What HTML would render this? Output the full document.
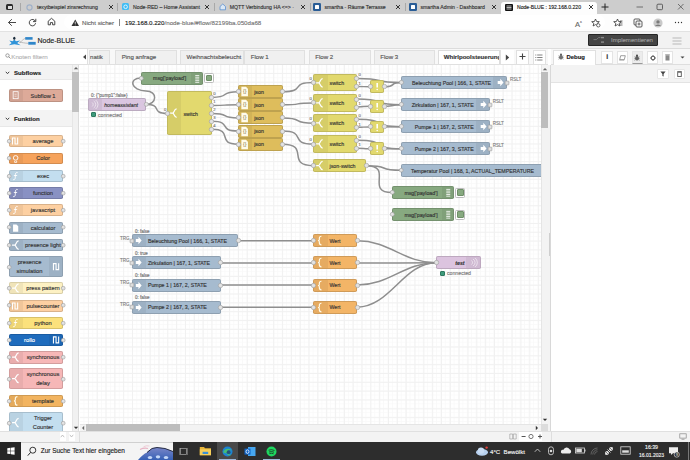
<!DOCTYPE html><html><head><meta charset="utf-8"><style>
html,body{margin:0;padding:0}
body{width:690px;height:460px;overflow:hidden;position:relative;font-family:"Liberation Sans",sans-serif;background:#fff}
div{box-sizing:border-box;-webkit-text-stroke-width:0.14px}
</style></head><body>
<div style="position:absolute;left:0px;top:0px;width:690px;height:13.5px;background:#cdcdcd"></div>
<div style="position:absolute;left:6px;top:3.5px;width:7px;height:6.5px;background:#2b2b2b;border-radius:1.5px"></div>
<div style="position:absolute;left:7.5px;top:6.2px;width:4px;height:2.8px;background:#ddd"></div>
<div style="position:absolute;left:20px;top:3px;width:0.8px;height:8px;background:#a8a8a8"></div>
<div style="position:absolute;left:117px;top:3px;width:0.8px;height:8px;background:#a8a8a8"></div>
<div style="position:absolute;left:213.6px;top:3px;width:0.8px;height:8px;background:#a8a8a8"></div>
<div style="position:absolute;left:309.6px;top:3px;width:0.8px;height:8px;background:#a8a8a8"></div>
<div style="position:absolute;left:405px;top:3px;width:0.8px;height:8px;background:#a8a8a8"></div>
<svg style="position:absolute;left:26px;top:3.5px;" width="7" height="7" viewBox="0 0 7 7"><circle cx="3.5" cy="3.5" r="2.6" fill="none" stroke="#9fb0c8" stroke-width="1.1"/></svg>
<div style="position:absolute;left:37px;top:3.88px;height:6.24px;line-height:6.24px;font-size:5.2px;color:#333;white-space:nowrap;">texytbeispiel zinsrechnung</div>
<svg style="position:absolute;left:107.5px;top:4px;" width="6" height="6" viewBox="0 0 6 6"><path d="M1 1 L5 5 M5 1 L1 5" stroke="#222" stroke-width="0.9"/></svg>
<div style="position:absolute;left:122px;top:3.2px;width:7.2px;height:7.2px;background:#41bdf5;border-radius:1.5px"></div>
<svg style="position:absolute;left:122px;top:3.2px;" width="7.2" height="7.2" viewBox="0 0 7.2 7.2"><circle cx="3.6" cy="3.8" r="1.8" fill="none" stroke="#fff" stroke-width="0.8"/></svg>
<div style="position:absolute;left:133px;top:3.88px;height:6.24px;line-height:6.24px;font-size:5.2px;color:#333;white-space:nowrap;">Node-RED – Home Assistant</div>
<svg style="position:absolute;left:203.5px;top:4px;" width="6" height="6" viewBox="0 0 6 6"><path d="M1 1 L5 5 M5 1 L1 5" stroke="#222" stroke-width="0.9"/></svg>
<svg style="position:absolute;left:218.7px;top:3px;" width="7.5" height="7.5" viewBox="0 0 7.5 7.5"><path d="M1 3.5 L3.75 1 L6.5 3.5 V6.8 H1 Z" fill="#dbe8f5" stroke="#5b8fd0" stroke-width="0.8"/></svg>
<div style="position:absolute;left:229.7px;top:3.88px;height:6.24px;line-height:6.24px;font-size:5.2px;color:#333;white-space:nowrap;">MQTT Verbindung HA &lt;=&gt; ·</div>
<svg style="position:absolute;left:299.5px;top:4px;" width="6" height="6" viewBox="0 0 6 6"><path d="M1 1 L5 5 M5 1 L1 5" stroke="#222" stroke-width="0.9"/></svg>
<div style="position:absolute;left:313.4px;top:3.3px;width:7.4px;height:7.4px;background:#2a5d96;border-radius:1.2px"></div>
<div style="position:absolute;left:315.09999999999997px;top:5.0px;width:4px;height:4px;background:#fff;border-radius:0.5px"></div>
<div style="position:absolute;left:324.4px;top:3.88px;height:6.24px;line-height:6.24px;font-size:5.2px;color:#333;white-space:nowrap;">smartha - Räume Terrasse</div>
<svg style="position:absolute;left:394.8px;top:4px;" width="6" height="6" viewBox="0 0 6 6"><path d="M1 1 L5 5 M5 1 L1 5" stroke="#222" stroke-width="0.9"/></svg>
<div style="position:absolute;left:409.4px;top:3.3px;width:7.4px;height:7.4px;background:#2a5d96;border-radius:1.2px"></div>
<div style="position:absolute;left:411.09999999999997px;top:5.0px;width:4px;height:4px;background:#fff;border-radius:0.5px"></div>
<div style="position:absolute;left:420.4px;top:3.88px;height:6.24px;line-height:6.24px;font-size:5.2px;color:#333;white-space:nowrap;">smartha Admin - Dashboard</div>
<svg style="position:absolute;left:491.2px;top:4px;" width="6" height="6" viewBox="0 0 6 6"><path d="M1 1 L5 5 M5 1 L1 5" stroke="#222" stroke-width="0.9"/></svg>
<div style="position:absolute;left:501px;top:2px;width:96px;height:12px;background:#fdfdfd;border-radius:3px 3px 0 0"></div>
<div style="position:absolute;left:504.5px;top:3.5px;width:8px;height:7px;background:#111;border-radius:1px"></div>
<svg style="position:absolute;left:504.5px;top:3.5px;" width="8" height="7" viewBox="0 0 8 7"><path d="M1.5 2 H6.5 M1.5 3.5 L6.5 3.5 M1.5 5 H6.5" stroke="#fff" stroke-width="0.7"/></svg>
<div style="position:absolute;left:517px;top:4.140000000000001px;height:6.119999999999999px;line-height:6.119999999999999px;font-size:5.1px;color:#222;white-space:nowrap;">Node-BLUE : 192.168.0.220</div>
<svg style="position:absolute;left:587.5px;top:4px;" width="6" height="6" viewBox="0 0 6 6"><path d="M1 1 L5 5 M5 1 L1 5" stroke="#222" stroke-width="0.9"/></svg>
<svg style="position:absolute;left:600.5px;top:3px;" width="8" height="8" viewBox="0 0 8 8"><path d="M4 0.5 V7.5 M0.5 4 H7.5" stroke="#222" stroke-width="1"/></svg>
<svg style="position:absolute;left:636px;top:3px;" width="8" height="8" viewBox="0 0 8 8"><path d="M0.5 4 H7" stroke="#555" stroke-width="0.8"/></svg>
<svg style="position:absolute;left:656px;top:3.2px;" width="8" height="8" viewBox="0 0 8 8"><rect x="1" y="1.2" width="5.5" height="5.5" rx="1" fill="none" stroke="#444" stroke-width="0.8"/></svg>
<svg style="position:absolute;left:676.5px;top:3.2px;" width="8" height="8" viewBox="0 0 8 8"><path d="M1 1 L6.5 6.5 M6.5 1 L1 6.5" stroke="#555" stroke-width="0.8"/></svg>
<div style="position:absolute;left:0px;top:13.5px;width:690px;height:17.5px;background:#fdfdfd"></div>
<div style="position:absolute;left:64px;top:15.3px;width:541px;height:14.2px;background:#fff;border-radius:7px"></div>
<div style="position:absolute;left:0px;top:31px;width:690px;height:1px;background:#e2e2e2"></div>
<svg style="position:absolute;left:7px;top:17.5px;" width="10" height="9" viewBox="0 0 10 9"><path d="M9 4.5 H1.5 M4.8 1.2 L1.5 4.5 L4.8 7.8" fill="none" stroke="#333" stroke-width="0.9"/></svg>
<svg style="position:absolute;left:27.5px;top:17.5px;" width="9" height="9" viewBox="0 0 9 9"><path d="M7.3 3.2 A3.2 3.2 0 1 0 7.6 5.2" fill="none" stroke="#333" stroke-width="0.9"/><path d="M7.8 0.8 V3.6 H5" fill="none" stroke="#333" stroke-width="0.9"/></svg>
<svg style="position:absolute;left:46.5px;top:17.3px;" width="9" height="9" viewBox="0 0 9 9"><path d="M1.2 4.2 L4.5 1.3 L7.8 4.2 V7.8 H5.6 V5.6 H3.4 V7.8 H1.2 Z" fill="none" stroke="#333" stroke-width="0.9" stroke-linejoin="round"/></svg>
<svg style="position:absolute;left:71px;top:18.5px;" width="8.5" height="7.5" viewBox="0 0 8.5 7.5"><path d="M4.25 0.6 L8 7 H0.5 Z" fill="#333"/><path d="M4.25 2.7 V4.8" stroke="#fff" stroke-width="0.8"/><circle cx="4.25" cy="5.9" r="0.45" fill="#fff"/></svg>
<div style="position:absolute;left:82px;top:18.622px;height:7.356px;line-height:7.356px;font-size:6.13px;color:#666;white-space:nowrap;">Nicht sicher</div>
<div style="position:absolute;left:118.5px;top:18.5px;width:0.7px;height:7.5px;background:#888"></div>
<div style="position:absolute;left:125px;top:18.592000000000002px;height:7.4159999999999995px;line-height:7.4159999999999995px;font-size:6.18px;color:#777;white-space:nowrap;"><span style="color:#222">192.168.0.220</span><span style="color:#777">/node-blue/#flow/82199ba.050da68</span></div>
<div style="position:absolute;left:575px;top:17.8px;height:9.0px;line-height:9.0px;font-size:7.5px;color:#666;white-space:nowrap;">A<sup style="font-size:3.5px">ᴧ</sup></div>
<svg style="position:absolute;left:591px;top:17.5px;" width="10" height="10" viewBox="0 0 10 10"><path d="M4.5 1 L5.6 3.5 L8.3 3.7 L6.2 5.4 L6.9 8 L4.5 6.6 L2.1 8 L2.8 5.4 L0.7 3.7 L3.4 3.5 Z" fill="none" stroke="#333" stroke-width="0.8"/><circle cx="7.3" cy="7.3" r="1.7" fill="#fff" stroke="#333" stroke-width="0.7"/></svg>
<svg style="position:absolute;left:612.5px;top:17.5px;" width="10" height="10" viewBox="0 0 10 10"><path d="M4.5 1 L5.6 3.5 L8.3 3.7 L6.2 5.4 L6.9 8 L4.5 6.6 L2.1 8 L2.8 5.4 L0.7 3.7 L3.4 3.5 Z" fill="none" stroke="#333" stroke-width="0.8"/><path d="M7 3 H9.5 M7 5 H9.5 M7 7 H9.5" stroke="#333" stroke-width="0.7"/></svg>
<svg style="position:absolute;left:632.5px;top:17.5px;" width="10" height="10" viewBox="0 0 10 10"><rect x="1" y="1" width="6" height="6" rx="1" fill="none" stroke="#333" stroke-width="0.8"/><rect x="3" y="3" width="6" height="6" rx="1" fill="#f7f7f7" stroke="#333" stroke-width="0.8"/><path d="M6 4.5 V7.5 M4.5 6 H7.5" stroke="#333" stroke-width="0.7"/></svg>
<svg style="position:absolute;left:652.5px;top:17.5px;" width="10" height="10" viewBox="0 0 10 10"><circle cx="5" cy="5" r="4.6" fill="#c9c9c9"/><circle cx="5" cy="3.9" r="1.7" fill="#7a7a7a"/><path d="M1.8 8 Q5 4.8 8.2 8" fill="#7a7a7a"/></svg>
<svg style="position:absolute;left:673.5px;top:20px;" width="10" height="5" viewBox="0 0 10 5"><circle cx="1.5" cy="2.5" r="0.65" fill="#333"/><circle cx="4.5" cy="2.5" r="0.65" fill="#333"/><circle cx="7.5" cy="2.5" r="0.65" fill="#333"/></svg>
<div style="position:absolute;left:0px;top:32px;width:690px;height:16.4px;background:#f2f2f2"></div>
<div style="position:absolute;left:0px;top:48.1px;width:690px;height:0.6px;background:#dcdcdc"></div>
<svg style="position:absolute;left:0px;top:30px;" width="40" height="20" viewBox="0 0 40 20">
<path d="M9.3 40.6 L12.6 41.2 L14.3 39.6 L16 41.2 L20.2 40.6 L17.2 43 L20.6 45.2 L14.3 44.2 L8.8 45.2 L11.6 43 Z" fill="#2f93d8" transform="translate(0,-30)"/>
<ellipse cx="14.3" cy="8.2" rx="1.15" ry="1.5" fill="#1a2a3a"/>
<path d="M19.5 12.3 C22 12.3 22.5 8.5 25.3 8.5" fill="none" stroke="#999" stroke-width="0.6"/>
<path d="M19.5 12.3 C22.5 12.3 24.5 13.3 28.3 13.3" fill="none" stroke="#999" stroke-width="0.6"/>
<rect x="25.2" y="7.1" width="7.4" height="2.6" fill="#2f86c9"/>
<rect x="28.3" y="11.9" width="7.4" height="2.8" fill="#2f86c9"/>
</svg>
<div style="position:absolute;left:37.5px;top:36.982px;height:8.436px;line-height:8.436px;font-size:7.03px;color:#222;white-space:nowrap;">Node-BLUE</div>
<div style="position:absolute;left:588px;top:33.7px;width:70px;height:12.6px;background:#454545;border:0.8px solid #262626;border-radius:1px"></div>
<svg style="position:absolute;left:592.5px;top:36px;" width="12" height="8" viewBox="0 0 12 8"><path d="M0.5 3.6 H3.5 L5.5 1.6 H7.5" fill="none" stroke="#8a8a8a" stroke-width="0.7"/><rect x="8" y="0.9" width="3" height="1.4" fill="#8a8a8a"/><rect x="8" y="5.4" width="3" height="1.4" fill="#8a8a8a"/></svg>
<div style="position:absolute;left:611px;top:35.846000000000004px;height:7.308px;line-height:7.308px;font-size:6.09px;color:#9d9d9d;white-space:nowrap;">Implementieren</div>
<svg style="position:absolute;left:672px;top:36.5px;" width="10" height="8" viewBox="0 0 10 8"><path d="M0.5 1 H9.5 M0.5 4 H9.5 M0.5 7 H9.5" stroke="#aaa" stroke-width="0.8"/></svg>
<div style="position:absolute;left:0px;top:48.7px;width:548px;height:15.8px;background:#f8f8f8"></div>
<div style="position:absolute;left:0px;top:48.7px;width:88px;height:15.6px;background:#fff;border-right:0.6px solid #e0e0e0"></div>
<svg style="position:absolute;left:4.5px;top:52.5px;" width="6" height="6" viewBox="0 0 6 6"><circle cx="2.5" cy="2.5" r="1.7" fill="none" stroke="#888" stroke-width="0.8"/><path d="M3.7 3.7 L5.5 5.5" stroke="#888" stroke-width="0.9"/></svg>
<div style="position:absolute;left:11.3px;top:52.886px;height:7.428px;line-height:7.428px;font-size:6.19px;color:#b5b5b5;white-space:nowrap;">Knoten filtern</div>
<svg style="position:absolute;left:81.5px;top:53.5px;" width="5" height="6" viewBox="0 0 5 6"><path d="M4 0.5 L1 3 L4 5.5 Z" fill="#444"/></svg>
<div style="position:absolute;left:88.5px;top:49.5px;width:21.5px;height:14.8px;background:#f0f0f0;border:0.6px solid #e0e0e0;border-bottom:none;overflow:hidden"><div style="position:absolute;left:0.5px;top:-1px;line-height:14px;font-size:6.1px;color:#555;white-space:nowrap">natik</div></div>
<div style="position:absolute;left:115.2px;top:49.5px;width:61.39999999999999px;height:14.8px;background:#f0f0f0;border:0.6px solid #e0e0e0;border-bottom:none;overflow:hidden"><div style="position:absolute;left:5.5px;top:-1px;line-height:14px;font-size:6.1px;color:#555;white-space:nowrap">Ping anfrage</div></div>
<div style="position:absolute;left:180px;top:49.5px;width:64px;height:14.8px;background:#f0f0f0;border:0.6px solid #e0e0e0;border-bottom:none;overflow:hidden"><div style="position:absolute;left:5.5px;top:-1px;line-height:14px;font-size:6.1px;color:#555;white-space:nowrap">Weihnachtsbeleucht</div></div>
<div style="position:absolute;left:244.3px;top:49.5px;width:60.69999999999999px;height:14.8px;background:#f0f0f0;border:0.6px solid #e0e0e0;border-bottom:none;overflow:hidden"><div style="position:absolute;left:5.5px;top:-1px;line-height:14px;font-size:6.1px;color:#555;white-space:nowrap">Flow 1</div></div>
<div style="position:absolute;left:308.8px;top:49.5px;width:61.89999999999998px;height:14.8px;background:#f0f0f0;border:0.6px solid #e0e0e0;border-bottom:none;overflow:hidden"><div style="position:absolute;left:5.5px;top:-1px;line-height:14px;font-size:6.1px;color:#555;white-space:nowrap">Flow 2</div></div>
<div style="position:absolute;left:373.7px;top:49.5px;width:61.30000000000001px;height:14.8px;background:#f0f0f0;border:0.6px solid #e0e0e0;border-bottom:none;overflow:hidden"><div style="position:absolute;left:5.5px;top:-1px;line-height:14px;font-size:6.1px;color:#555;white-space:nowrap">Flow 3</div></div>
<div style="position:absolute;left:437.5px;top:49.5px;width:62.30000000000001px;height:15.2px;background:#fff;border:0.6px solid #ddd;border-bottom:none;overflow:hidden"><div style="position:absolute;left:5.2px;top:-1px;line-height:14px;font-size:6.1px;font-weight:bold;color:#333;white-space:nowrap">Whirlpoolsteuerung</div></div>
<div style="position:absolute;left:0px;top:64.2px;width:548px;height:0.6px;background:#e0e0e0"></div>
<div style="position:absolute;left:500px;top:49.5px;width:14px;height:14.8px;background:#fff;border-left:0.6px solid #e0e0e0"></div>
<svg style="position:absolute;left:505px;top:53.5px;" width="5" height="7" viewBox="0 0 5 7"><path d="M0.8 0.5 L4.2 3.5 L0.8 6.5 Z" fill="#444"/></svg>
<div style="position:absolute;left:515.8px;top:49.5px;width:13.2px;height:14.8px;background:#fff;border:0.6px solid #e0e0e0;border-bottom:none"></div>
<svg style="position:absolute;left:518.9px;top:53.4px;" width="7" height="7" viewBox="0 0 7 7"><path d="M3.5 0.5 V6.5 M0.5 3.5 H6.5" stroke="#444" stroke-width="1.1"/></svg>
<div style="position:absolute;left:532.8px;top:49.5px;width:13.2px;height:14.8px;background:#fff;border:0.6px solid #e0e0e0;border-bottom:none"></div>
<svg style="position:absolute;left:535.4px;top:53.5px;" width="8" height="7" viewBox="0 0 8 7"><path d="M2.2 1 H7.5 M2.2 3.5 H7.5 M2.2 6 H7.5 M0.3 1 H1.3 M0.3 3.5 H1.3 M0.3 6 H1.3" stroke="#555" stroke-width="0.75"/></svg>
<div style="position:absolute;left:0px;top:64.8px;width:79.5px;height:366.4px;background:#fff"></div>
<div style="position:absolute;left:72.3px;top:64.8px;width:7.2px;height:366.4px;background:#f1f1f1;border-left:0.5px solid #e6e6e6;border-right:0.6px solid #dcdcdc"></div>
<div style="position:absolute;left:72.4px;top:71.8px;width:6.9px;height:39.9px;background:#c1c1c1"></div>
<svg style="position:absolute;left:73px;top:66px;" width="6" height="4" viewBox="0 0 6 4"><path d="M0.8 3.2 L3 1 L5.2 3.2 Z" fill="#666"/></svg>
<svg style="position:absolute;left:73px;top:425.5px;" width="6" height="4" viewBox="0 0 6 4"><path d="M0.8 0.8 L3 3 L5.2 0.8 Z" fill="#333"/></svg>
<div style="position:absolute;left:0px;top:64.8px;width:72.3px;height:15.5px;background:#f3f3f3;border-bottom:0.5px solid #e8e8e8"></div>
<svg style="position:absolute;left:4.8px;top:70.55px;" width="5" height="4" viewBox="0 0 5 4"><path d="M0.8 0.8 L2.5 2.7 L4.2 0.8" fill="none" stroke="#444" stroke-width="1"/></svg>
<div style="position:absolute;left:14px;top:69.002px;height:7.295999999999999px;line-height:7.295999999999999px;font-size:6.08px;color:#222;white-space:nowrap;font-weight:bold">Subflows</div>
<div style="position:absolute;left:0px;top:110.3px;width:72.3px;height:16.5px;background:#f3f3f3;border-bottom:0.5px solid #e8e8e8"></div>
<svg style="position:absolute;left:4.8px;top:116.55px;" width="5" height="4" viewBox="0 0 5 4"><path d="M0.8 0.8 L2.5 2.7 L4.2 0.8" fill="none" stroke="#444" stroke-width="1"/></svg>
<div style="position:absolute;left:14px;top:115.002px;height:7.295999999999999px;line-height:7.295999999999999px;font-size:6.08px;color:#222;white-space:nowrap;font-weight:bold">Funktion</div>
<div style="position:absolute;left:9.1px;top:89.4px;width:53.6px;height:12.399999999999991px;background:#ddaa99;border:0.6px solid rgba(0,0,0,0.14);border-radius:1.8px;overflow:hidden">
<div style="position:absolute;left:0;top:0;width:13.3px;height:100%;background:rgba(0,0,0,0.05);"></div>
</div>
<svg style="position:absolute;left:9.1px;top:89.4px;" width="13.3" height="12.399999999999991" viewBox="0 0 13.3 12.399999999999991"><rect x="4.15" y="2.6999999999999957" width="5" height="7" fill="none" stroke="#fff" stroke-width="0.8"/><path d="M5.45 5.199999999999996 H7.65 M5.45 7.199999999999996 H7.65" stroke="#fff" stroke-width="0.6"/></svg>
<div style="position:absolute;left:-157px;width:400px;text-align:center;top:92.58px;height:6.84px;line-height:6.84px;font-size:5.7px;color:#333;white-space:nowrap;">Subflow 1</div>
<div style="position:absolute;left:9.1px;top:135.4px;width:54.1px;height:11.900000000000006px;background:#fdd0a2;border:0.6px solid rgba(0,0,0,0.14);border-radius:1.8px;overflow:hidden">
<div style="position:absolute;left:0;top:0;width:13.3px;height:100%;background:rgba(0,0,0,0.05);"></div>
</div>
<svg style="position:absolute;left:9.1px;top:135.4px;" width="13.3" height="11.900000000000006" viewBox="0 0 13.3 11.900000000000006"><path d="M3.45 9.450000000000003 V2.950000000000003 H6.050000000000001 V8.950000000000003 H8.65 V2.450000000000003" fill="none" stroke="#fff" stroke-width="1.1"/></svg>
<div style="position:absolute;left:-157px;width:400px;text-align:center;top:138.30000000000004px;height:6.8999999999999995px;line-height:6.8999999999999995px;font-size:5.75px;color:#333;white-space:nowrap;">average</div>
<svg style="position:absolute;left:5.8999999999999995px;top:138.15000000000003px" width="6.4" height="6.4"><circle cx="3.2" cy="3.2" r="1.9000000000000001" fill="#e2e2e2" stroke="#9a9a9a" stroke-width="0.6"/></svg>
<svg style="position:absolute;left:60.0px;top:138.15000000000003px" width="6.4" height="6.4"><circle cx="3.2" cy="3.2" r="1.9000000000000001" fill="#e2e2e2" stroke="#9a9a9a" stroke-width="0.6"/></svg>
<div style="position:absolute;left:9.1px;top:152.6px;width:54.1px;height:11.800000000000011px;background:#f6a35c;border:0.6px solid rgba(0,0,0,0.14);border-radius:1.8px;overflow:hidden">
<div style="position:absolute;left:0;top:0;width:13.3px;height:100%;background:rgba(0,0,0,0.05);"></div>
</div>
<svg style="position:absolute;left:9.1px;top:152.6px;" width="13.3" height="11.800000000000011" viewBox="0 0 13.3 11.800000000000011"><circle cx="6.65" cy="4.900000000000006" r="2.3" fill="none" stroke="#fff" stroke-width="0.9"/><path d="M5.65 7.900000000000006 V9.400000000000006 H7.65 V7.900000000000006" fill="none" stroke="#fff" stroke-width="0.8"/></svg>
<div style="position:absolute;left:-157px;width:400px;text-align:center;top:155.45000000000002px;height:6.8999999999999995px;line-height:6.8999999999999995px;font-size:5.75px;color:#333;white-space:nowrap;">Color</div>
<svg style="position:absolute;left:5.8999999999999995px;top:155.3px" width="6.4" height="6.4"><circle cx="3.2" cy="3.2" r="1.9000000000000001" fill="#e2e2e2" stroke="#9a9a9a" stroke-width="0.6"/></svg>
<div style="position:absolute;left:9.1px;top:170.1px;width:54.1px;height:12.200000000000017px;background:#c3deef;border:0.6px solid rgba(0,0,0,0.14);border-radius:1.8px;overflow:hidden">
<div style="position:absolute;left:0;top:0;width:13.3px;height:100%;background:rgba(0,0,0,0.05);"></div>
</div>
<svg style="position:absolute;left:9.1px;top:170.1px;" width="13.3" height="12.200000000000017" viewBox="0 0 13.3 12.200000000000017"><path d="M8.65 2.6000000000000085 C6.65 1.9000000000000083 6.3500000000000005 3.6000000000000085 6.3500000000000005 6.1000000000000085 C6.3500000000000005 8.600000000000009 6.050000000000001 10.100000000000009 4.15 9.700000000000008 M4.8500000000000005 5.500000000000009 H8.15" fill="none" stroke="#fff" stroke-width="0.9"/></svg>
<div style="position:absolute;left:-157px;width:400px;text-align:center;top:173.15px;height:6.8999999999999995px;line-height:6.8999999999999995px;font-size:5.75px;color:#333;white-space:nowrap;">exec</div>
<svg style="position:absolute;left:5.8999999999999995px;top:173.0px" width="6.4" height="6.4"><circle cx="3.2" cy="3.2" r="1.9000000000000001" fill="#e2e2e2" stroke="#9a9a9a" stroke-width="0.6"/></svg>
<svg style="position:absolute;left:60.0px;top:173.0px" width="6.4" height="6.4"><circle cx="3.2" cy="3.2" r="1.9000000000000001" fill="#e2e2e2" stroke="#9a9a9a" stroke-width="0.6"/></svg>
<div style="position:absolute;left:9.1px;top:186.9px;width:54.1px;height:12.099999999999994px;background:#8991c3;border:0.6px solid rgba(0,0,0,0.14);border-radius:1.8px;overflow:hidden">
<div style="position:absolute;left:0;top:0;width:13.3px;height:100%;background:rgba(0,0,0,0.05);"></div>
</div>
<svg style="position:absolute;left:9.1px;top:186.9px;" width="13.3" height="12.099999999999994" viewBox="0 0 13.3 12.099999999999994"><path d="M8.65 2.549999999999997 C6.65 1.849999999999997 6.3500000000000005 3.549999999999997 6.3500000000000005 6.049999999999997 C6.3500000000000005 8.549999999999997 6.050000000000001 10.049999999999997 4.15 9.649999999999997 M4.8500000000000005 5.4499999999999975 H8.15" fill="none" stroke="#fff" stroke-width="0.9"/></svg>
<div style="position:absolute;left:-157px;width:400px;text-align:center;top:189.9px;height:6.8999999999999995px;line-height:6.8999999999999995px;font-size:5.75px;color:#333;white-space:nowrap;">function</div>
<svg style="position:absolute;left:5.8999999999999995px;top:189.75px" width="6.4" height="6.4"><circle cx="3.2" cy="3.2" r="1.9000000000000001" fill="#e2e2e2" stroke="#9a9a9a" stroke-width="0.6"/></svg>
<svg style="position:absolute;left:60.0px;top:189.75px" width="6.4" height="6.4"><circle cx="3.2" cy="3.2" r="1.9000000000000001" fill="#e2e2e2" stroke="#9a9a9a" stroke-width="0.6"/></svg>
<div style="position:absolute;left:9.1px;top:204.4px;width:54.1px;height:12.099999999999994px;background:#fdd0a2;border:0.6px solid rgba(0,0,0,0.14);border-radius:1.8px;overflow:hidden">
<div style="position:absolute;left:0;top:0;width:13.3px;height:100%;background:rgba(0,0,0,0.05);"></div>
</div>
<svg style="position:absolute;left:9.1px;top:204.4px;" width="13.3" height="12.099999999999994" viewBox="0 0 13.3 12.099999999999994"><path d="M8.65 2.549999999999997 C6.65 1.849999999999997 6.3500000000000005 3.549999999999997 6.3500000000000005 6.049999999999997 C6.3500000000000005 8.549999999999997 6.050000000000001 10.049999999999997 4.15 9.649999999999997 M4.8500000000000005 5.4499999999999975 H8.15" fill="none" stroke="#fff" stroke-width="0.9"/></svg>
<div style="position:absolute;left:-157px;width:400px;text-align:center;top:207.4px;height:6.8999999999999995px;line-height:6.8999999999999995px;font-size:5.75px;color:#333;white-space:nowrap;">javascript</div>
<svg style="position:absolute;left:5.8999999999999995px;top:207.25px" width="6.4" height="6.4"><circle cx="3.2" cy="3.2" r="1.9000000000000001" fill="#e2e2e2" stroke="#9a9a9a" stroke-width="0.6"/></svg>
<svg style="position:absolute;left:60.0px;top:207.25px" width="6.4" height="6.4"><circle cx="3.2" cy="3.2" r="1.9000000000000001" fill="#e2e2e2" stroke="#9a9a9a" stroke-width="0.6"/></svg>
<div style="position:absolute;left:9.1px;top:221.6px;width:54.1px;height:12.099999999999994px;background:#a6bbcf;border:0.6px solid rgba(0,0,0,0.14);border-radius:1.8px;overflow:hidden">
<div style="position:absolute;left:0;top:0;width:13.3px;height:100%;background:rgba(0,0,0,0.05);"></div>
</div>
<svg style="position:absolute;left:9.1px;top:221.6px;" width="13.3" height="12.099999999999994" viewBox="0 0 13.3 12.099999999999994"><path d="M4.050000000000001 2.449999999999997 H7.45 L9.25 4.249999999999997 V9.649999999999997 H4.050000000000001 Z" fill="#fff"/></svg>
<div style="position:absolute;left:-157px;width:400px;text-align:center;top:224.6px;height:6.8999999999999995px;line-height:6.8999999999999995px;font-size:5.75px;color:#333;white-space:nowrap;">calculator</div>
<svg style="position:absolute;left:5.8999999999999995px;top:224.45px" width="6.4" height="6.4"><circle cx="3.2" cy="3.2" r="1.9000000000000001" fill="#e2e2e2" stroke="#9a9a9a" stroke-width="0.6"/></svg>
<svg style="position:absolute;left:60.0px;top:224.45px" width="6.4" height="6.4"><circle cx="3.2" cy="3.2" r="1.9000000000000001" fill="#e2e2e2" stroke="#9a9a9a" stroke-width="0.6"/></svg>
<div style="position:absolute;left:9.1px;top:238.9px;width:54.1px;height:12.199999999999989px;background:#a6bbcf;border:0.6px solid rgba(0,0,0,0.14);border-radius:1.8px;overflow:hidden">
<div style="position:absolute;left:0;top:0;width:13.3px;height:100%;background:rgba(0,0,0,0.05);"></div>
</div>
<svg style="position:absolute;left:9.1px;top:238.9px;" width="13.3" height="12.199999999999989" viewBox="0 0 13.3 12.199999999999989"><path d="M3.0500000000000003 6.099999999999994 H5.65 C7.25 6.099999999999994 6.95 1.8999999999999941 9.65 1.8999999999999941 M5.65 6.099999999999994 C7.25 6.099999999999994 6.95 10.299999999999994 9.65 10.299999999999994" fill="none" stroke="#fff" stroke-width="1.25"/></svg>
<div style="position:absolute;left:-157px;width:400px;text-align:center;top:241.95000000000002px;height:6.8999999999999995px;line-height:6.8999999999999995px;font-size:5.75px;color:#333;white-space:nowrap;">presence light</div>
<svg style="position:absolute;left:5.8999999999999995px;top:241.8px" width="6.4" height="6.4"><circle cx="3.2" cy="3.2" r="1.9000000000000001" fill="#e2e2e2" stroke="#9a9a9a" stroke-width="0.6"/></svg>
<svg style="position:absolute;left:60.0px;top:241.8px" width="6.4" height="6.4"><circle cx="3.2" cy="3.2" r="1.9000000000000001" fill="#e2e2e2" stroke="#9a9a9a" stroke-width="0.6"/></svg>
<div style="position:absolute;left:9.1px;top:256.1px;width:54.1px;height:21.299999999999955px;background:#a6bbcf;border:0.6px solid rgba(0,0,0,0.14);border-radius:1.8px;overflow:hidden">
<div style="position:absolute;right:0;top:0;width:13.3px;height:100%;background:rgba(0,0,0,0.05);"></div>
</div>
<svg style="position:absolute;left:49.900000000000006px;top:256.1px;" width="13.3" height="21.299999999999955" viewBox="0 0 13.3 21.299999999999955"><path d="M3.45 14.149999999999977 V7.649999999999977 H6.050000000000001 V13.649999999999977 H8.65 V7.149999999999977" fill="none" stroke="#fff" stroke-width="1.1"/></svg>
<div style="position:absolute;left:-170.5px;width:400px;text-align:center;top:259.3875px;height:6.8999999999999995px;line-height:6.8999999999999995px;font-size:5.75px;color:#333;white-space:nowrap;">presence</div>
<div style="position:absolute;left:-170.5px;width:400px;text-align:center;top:268.0125px;height:6.8999999999999995px;line-height:6.8999999999999995px;font-size:5.75px;color:#333;white-space:nowrap;">simulation</div>
<svg style="position:absolute;left:5.8999999999999995px;top:263.55px" width="6.4" height="6.4"><circle cx="3.2" cy="3.2" r="1.9000000000000001" fill="#e2e2e2" stroke="#9a9a9a" stroke-width="0.6"/></svg>
<div style="position:absolute;left:9.1px;top:282.3px;width:54.1px;height:12.099999999999966px;background:#fdf1c3;border:0.6px solid rgba(0,0,0,0.14);border-radius:1.8px;overflow:hidden">
<div style="position:absolute;left:0;top:0;width:13.3px;height:100%;background:rgba(0,0,0,0.05);"></div>
</div>
<svg style="position:absolute;left:9.1px;top:282.3px;" width="13.3" height="12.099999999999966" viewBox="0 0 13.3 12.099999999999966"><path d="M3.0500000000000003 6.049999999999983 H5.65 C7.25 6.049999999999983 6.95 1.8499999999999828 9.65 1.8499999999999828 M5.65 6.049999999999983 C7.25 6.049999999999983 6.95 10.249999999999982 9.65 10.249999999999982" fill="none" stroke="#fff" stroke-width="1.25"/></svg>
<div style="position:absolute;left:-157px;width:400px;text-align:center;top:285.3px;height:6.8999999999999995px;line-height:6.8999999999999995px;font-size:5.75px;color:#333;white-space:nowrap;">press pattern</div>
<svg style="position:absolute;left:5.8999999999999995px;top:285.15000000000003px" width="6.4" height="6.4"><circle cx="3.2" cy="3.2" r="1.9000000000000001" fill="#e2e2e2" stroke="#9a9a9a" stroke-width="0.6"/></svg>
<svg style="position:absolute;left:60.0px;top:285.15000000000003px" width="6.4" height="6.4"><circle cx="3.2" cy="3.2" r="1.9000000000000001" fill="#e2e2e2" stroke="#9a9a9a" stroke-width="0.6"/></svg>
<div style="position:absolute;left:9.1px;top:299.5px;width:54.1px;height:12.100000000000023px;background:#fdd0a2;border:0.6px solid rgba(0,0,0,0.14);border-radius:1.8px;overflow:hidden">
<div style="position:absolute;left:0;top:0;width:13.3px;height:100%;background:rgba(0,0,0,0.05);"></div>
</div>
<svg style="position:absolute;left:9.1px;top:299.5px;" width="13.3" height="12.100000000000023" viewBox="0 0 13.3 12.100000000000023"><path d="M3.45 9.550000000000011 V3.0500000000000114 H6.050000000000001 V9.050000000000011 H8.65 V2.5500000000000114" fill="none" stroke="#fff" stroke-width="1.1"/></svg>
<div style="position:absolute;left:-157px;width:400px;text-align:center;top:302.5px;height:6.8999999999999995px;line-height:6.8999999999999995px;font-size:5.75px;color:#333;white-space:nowrap;">pulsecounter</div>
<svg style="position:absolute;left:5.8999999999999995px;top:302.35px" width="6.4" height="6.4"><circle cx="3.2" cy="3.2" r="1.9000000000000001" fill="#e2e2e2" stroke="#9a9a9a" stroke-width="0.6"/></svg>
<svg style="position:absolute;left:60.0px;top:302.35px" width="6.4" height="6.4"><circle cx="3.2" cy="3.2" r="1.9000000000000001" fill="#e2e2e2" stroke="#9a9a9a" stroke-width="0.6"/></svg>
<div style="position:absolute;left:9.1px;top:316.8px;width:54.1px;height:12.199999999999989px;background:#fbe17c;border:0.6px solid rgba(0,0,0,0.14);border-radius:1.8px;overflow:hidden">
<div style="position:absolute;left:0;top:0;width:13.3px;height:100%;background:rgba(0,0,0,0.05);"></div>
</div>
<svg style="position:absolute;left:9.1px;top:316.8px;" width="13.3" height="12.199999999999989" viewBox="0 0 13.3 12.199999999999989"><path d="M8.65 2.5999999999999943 C6.65 1.8999999999999941 6.3500000000000005 3.5999999999999943 6.3500000000000005 6.099999999999994 C6.3500000000000005 8.599999999999994 6.050000000000001 10.099999999999994 4.15 9.699999999999994 M4.8500000000000005 5.499999999999995 H8.15" fill="none" stroke="#fff" stroke-width="0.9"/></svg>
<div style="position:absolute;left:-157px;width:400px;text-align:center;top:319.84999999999997px;height:6.8999999999999995px;line-height:6.8999999999999995px;font-size:5.75px;color:#333;white-space:nowrap;">python</div>
<svg style="position:absolute;left:5.8999999999999995px;top:319.7px" width="6.4" height="6.4"><circle cx="3.2" cy="3.2" r="1.9000000000000001" fill="#e2e2e2" stroke="#9a9a9a" stroke-width="0.6"/></svg>
<svg style="position:absolute;left:60.0px;top:319.7px" width="6.4" height="6.4"><circle cx="3.2" cy="3.2" r="1.9000000000000001" fill="#e2e2e2" stroke="#9a9a9a" stroke-width="0.6"/></svg>
<div style="position:absolute;left:9.1px;top:334.4px;width:54.1px;height:11.800000000000011px;background:#1f6cbd;border:0.6px solid rgba(0,0,0,0.14);border-radius:1.8px;overflow:hidden">
<div style="position:absolute;right:0;top:0;width:13.3px;height:100%;background:rgba(0,0,0,0.05);"></div>
</div>
<svg style="position:absolute;left:49.900000000000006px;top:334.4px;" width="13.3" height="11.800000000000011" viewBox="0 0 13.3 11.800000000000011"><path d="M3.45 9.400000000000006 V2.9000000000000057 H6.050000000000001 V8.900000000000006 H8.65 V2.4000000000000057" fill="none" stroke="#fff" stroke-width="1.1"/></svg>
<div style="position:absolute;left:-170.5px;width:400px;text-align:center;top:337.24999999999994px;height:6.8999999999999995px;line-height:6.8999999999999995px;font-size:5.75px;color:#fff;white-space:nowrap;">rollo</div>
<svg style="position:absolute;left:5.8999999999999995px;top:337.09999999999997px" width="6.4" height="6.4"><circle cx="3.2" cy="3.2" r="1.9000000000000001" fill="#e2e2e2" stroke="#9a9a9a" stroke-width="0.6"/></svg>
<svg style="position:absolute;left:60.0px;top:337.09999999999997px" width="6.4" height="6.4"><circle cx="3.2" cy="3.2" r="1.9000000000000001" fill="#e2e2e2" stroke="#9a9a9a" stroke-width="0.6"/></svg>
<div style="position:absolute;left:9.1px;top:351.4px;width:54.1px;height:12.200000000000045px;background:#f6b7b7;border:0.6px solid rgba(0,0,0,0.14);border-radius:1.8px;overflow:hidden">
<div style="position:absolute;left:0;top:0;width:13.3px;height:100%;background:rgba(0,0,0,0.05);"></div>
</div>
<svg style="position:absolute;left:9.1px;top:351.4px;" width="13.3" height="12.200000000000045" viewBox="0 0 13.3 12.200000000000045"><path d="M3.0500000000000003 6.100000000000023 H5.65 C7.25 6.100000000000023 6.95 1.9000000000000226 9.65 1.9000000000000226 M5.65 6.100000000000023 C7.25 6.100000000000023 6.95 10.300000000000022 9.65 10.300000000000022" fill="none" stroke="#fff" stroke-width="1.25"/></svg>
<div style="position:absolute;left:-157px;width:400px;text-align:center;top:354.45px;height:6.8999999999999995px;line-height:6.8999999999999995px;font-size:5.75px;color:#333;white-space:nowrap;">synchronous</div>
<svg style="position:absolute;left:5.8999999999999995px;top:354.3px" width="6.4" height="6.4"><circle cx="3.2" cy="3.2" r="1.9000000000000001" fill="#e2e2e2" stroke="#9a9a9a" stroke-width="0.6"/></svg>
<svg style="position:absolute;left:60.0px;top:354.3px" width="6.4" height="6.4"><circle cx="3.2" cy="3.2" r="1.9000000000000001" fill="#e2e2e2" stroke="#9a9a9a" stroke-width="0.6"/></svg>
<div style="position:absolute;left:9.1px;top:368.3px;width:54.1px;height:21.099999999999966px;background:#f6b7b7;border:0.6px solid rgba(0,0,0,0.14);border-radius:1.8px;overflow:hidden">
<div style="position:absolute;left:0;top:0;width:13.3px;height:100%;background:rgba(0,0,0,0.05);"></div>
</div>
<svg style="position:absolute;left:9.1px;top:368.3px;" width="13.3" height="21.099999999999966" viewBox="0 0 13.3 21.099999999999966"><path d="M3.0500000000000003 10.549999999999983 H5.65 C7.25 10.549999999999983 6.95 6.349999999999983 9.65 6.349999999999983 M5.65 10.549999999999983 C7.25 10.549999999999983 6.95 14.749999999999982 9.65 14.749999999999982" fill="none" stroke="#fff" stroke-width="1.25"/></svg>
<div style="position:absolute;left:-157px;width:400px;text-align:center;top:371.4875px;height:6.8999999999999995px;line-height:6.8999999999999995px;font-size:5.75px;color:#333;white-space:nowrap;">synchronous</div>
<div style="position:absolute;left:-157px;width:400px;text-align:center;top:380.1125px;height:6.8999999999999995px;line-height:6.8999999999999995px;font-size:5.75px;color:#333;white-space:nowrap;">delay</div>
<svg style="position:absolute;left:5.8999999999999995px;top:375.65000000000003px" width="6.4" height="6.4"><circle cx="3.2" cy="3.2" r="1.9000000000000001" fill="#e2e2e2" stroke="#9a9a9a" stroke-width="0.6"/></svg>
<svg style="position:absolute;left:60.0px;top:375.65000000000003px" width="6.4" height="6.4"><circle cx="3.2" cy="3.2" r="1.9000000000000001" fill="#e2e2e2" stroke="#9a9a9a" stroke-width="0.6"/></svg>
<div style="position:absolute;left:9.1px;top:395.1px;width:54.1px;height:11.799999999999955px;background:#f2b460;border:0.6px solid rgba(0,0,0,0.14);border-radius:1.8px;overflow:hidden">
<div style="position:absolute;left:0;top:0;width:13.3px;height:100%;background:rgba(0,0,0,0.05);"></div>
</div>
<svg style="position:absolute;left:9.1px;top:395.1px;" width="13.3" height="11.799999999999955" viewBox="0 0 13.3 11.799999999999955"><path d="M8.450000000000001 1.5999999999999774 Q6.3500000000000005 1.5999999999999774 6.3500000000000005 3.5999999999999774 V4.799999999999978 Q6.3500000000000005 5.899999999999977 4.95 5.899999999999977 Q6.3500000000000005 5.899999999999977 6.3500000000000005 6.999999999999977 V8.199999999999978 Q6.3500000000000005 10.199999999999978 8.450000000000001 10.199999999999978" fill="none" stroke="#fffbe8" stroke-width="1.15"/></svg>
<div style="position:absolute;left:-157px;width:400px;text-align:center;top:397.95px;height:6.8999999999999995px;line-height:6.8999999999999995px;font-size:5.75px;color:#333;white-space:nowrap;">template</div>
<svg style="position:absolute;left:5.8999999999999995px;top:397.8px" width="6.4" height="6.4"><circle cx="3.2" cy="3.2" r="1.9000000000000001" fill="#e2e2e2" stroke="#9a9a9a" stroke-width="0.6"/></svg>
<svg style="position:absolute;left:60.0px;top:397.8px" width="6.4" height="6.4"><circle cx="3.2" cy="3.2" r="1.9000000000000001" fill="#e2e2e2" stroke="#9a9a9a" stroke-width="0.6"/></svg>
<div style="position:absolute;left:9.1px;top:412.2px;width:54.1px;height:21.30000000000001px;background:#c3deef;border:0.6px solid rgba(0,0,0,0.14);border-radius:1.8px;overflow:hidden">
<div style="position:absolute;left:0;top:0;width:13.3px;height:100%;background:rgba(0,0,0,0.05);"></div>
</div>
<svg style="position:absolute;left:9.1px;top:412.2px;" width="13.3" height="21.30000000000001" viewBox="0 0 13.3 21.30000000000001"><path d="M3.0500000000000003 10.650000000000006 H5.65 C7.25 10.650000000000006 6.95 6.4500000000000055 9.65 6.4500000000000055 M5.65 10.650000000000006 C7.25 10.650000000000006 6.95 14.850000000000005 9.65 14.850000000000005" fill="none" stroke="#fff" stroke-width="1.25"/></svg>
<div style="position:absolute;left:-157px;width:400px;text-align:center;top:415.4875px;height:6.8999999999999995px;line-height:6.8999999999999995px;font-size:5.75px;color:#333;white-space:nowrap;">Trigger</div>
<div style="position:absolute;left:-157px;width:400px;text-align:center;top:424.1125px;height:6.8999999999999995px;line-height:6.8999999999999995px;font-size:5.75px;color:#333;white-space:nowrap;">Counter</div>
<svg style="position:absolute;left:5.8999999999999995px;top:419.65000000000003px" width="6.4" height="6.4"><circle cx="3.2" cy="3.2" r="1.9000000000000001" fill="#e2e2e2" stroke="#9a9a9a" stroke-width="0.6"/></svg>
<svg style="position:absolute;left:60.0px;top:419.65000000000003px" width="6.4" height="6.4"><circle cx="3.2" cy="3.2" r="1.9000000000000001" fill="#e2e2e2" stroke="#9a9a9a" stroke-width="0.6"/></svg>
<div style="position:absolute;left:79.5px;top:64.8px;width:468.5px;height:366.2px;background-color:#fff;
background-image:linear-gradient(to right,#f1f1f1 1px,transparent 1px),linear-gradient(to bottom,#f1f1f1 1px,transparent 1px),linear-gradient(to right,#f9f9f9 1px,transparent 1px),linear-gradient(to bottom,#fafafa 1px,transparent 1px);
background-size:8.83px 8.83px,8.83px 8.83px,4.415px 4.415px,4.415px 4.415px;background-position:7.9px 7.9px,7.9px 7.9px,3.5px 3.5px,3.5px 3.5px"></div>
<svg style="position:absolute;left:0px;top:0px;pointer-events:none" width="690" height="460" viewBox="0 0 690 460"><g fill="none" stroke="#8e8e8e" stroke-width="1.5"><path d="M146 104.5 C157 104.5 158 91 146 91 C131 91 128 78 141 78"/><path d="M146.00 104.50 C163.24 104.50 149.96 113.40 167.20 113.40"/><path d="M211.90 97.40 C231.93 97.40 217.97 91.75 238.00 91.75"/><path d="M211.90 105.40 C231.48 105.40 218.42 104.85 238.00 104.85"/><path d="M211.90 113.40 C231.77 113.40 218.13 117.95 238.00 117.95"/><path d="M211.90 121.30 C232.80 121.30 217.10 131.05 238.00 131.05"/><path d="M211.90 129.30 C234.42 129.30 215.48 144.15 238.00 144.15"/><path d="M282.50 91.75 C306.64 91.75 289.16 82.40 313.30 82.40"/><path d="M282.50 104.85 C305.65 104.85 290.15 102.90 313.30 102.90"/><path d="M282.50 117.95 C305.93 117.95 289.87 123.20 313.30 123.20"/><path d="M282.50 131.05 C307.59 131.05 288.21 144.10 313.30 144.10"/><path d="M282.50 144.15 C310.69 144.15 285.11 165.70 313.30 165.70"/><path d="M356.80 78.50 C389.43 78.50 368.68 82.50 401.30 82.50"/><path d="M356.80 86.50 C366.70 86.50 360.10 86.75 370.00 86.75"/><path d="M384.40 86.75 C397.47 86.75 388.23 82.50 401.30 82.50"/><path d="M356.80 99.00 C389.43 99.00 368.68 104.70 401.30 104.70"/><path d="M356.80 107.00 C366.72 107.00 360.08 106.15 370.00 106.15"/><path d="M384.40 106.15 C397.12 106.15 388.58 104.70 401.30 104.70"/><path d="M356.80 119.30 C389.43 119.30 368.68 126.70 401.30 126.70"/><path d="M356.80 127.30 C366.70 127.30 360.10 126.95 370.00 126.95"/><path d="M384.40 126.95 C397.08 126.95 388.62 126.70 401.30 126.70"/><path d="M356.80 140.20 C389.43 140.20 368.68 148.80 401.30 148.80"/><path d="M356.80 148.20 C366.71 148.20 360.09 148.75 370.00 148.75"/><path d="M384.40 148.75 C397.08 148.75 388.62 148.80 401.30 148.80"/><path d="M366.20 165.70 C392.75 165.70 374.75 170.30 401.30 170.30"/><path d="M366.20 165.70 C394.26 165.70 364.24 192.50 392.30 192.50"/><path d="M238.40 240.85 C271.02 240.85 280.68 240.85 313.30 240.85"/><path d="M357.30 240.85 C389.93 240.85 403.57 262.80 436.20 262.80"/><path d="M220.90 262.95 C253.53 262.95 280.68 262.95 313.30 262.95"/><path d="M357.30 262.95 C389.93 262.95 403.57 262.80 436.20 262.80"/><path d="M220.90 285.05 C253.53 285.05 280.68 285.05 313.30 285.05"/><path d="M357.30 285.05 C389.93 285.05 403.57 262.80 436.20 262.80"/><path d="M220.90 307.15 C253.53 307.15 280.68 307.15 313.30 307.15"/><path d="M357.30 307.15 C389.93 307.15 403.57 262.80 436.20 262.80"/></g></svg>
<div style="position:absolute;left:91px;top:92.53999999999999px;height:5.52px;line-height:5.52px;font-size:4.6px;color:#707070;white-space:nowrap;">0: {"pump1":false}</div>
<div style="position:absolute;left:88px;top:98px;width:58px;height:13px;background:#dac6e0;border:0.6px solid rgba(0,0,0,0.14);border-radius:1.8px;overflow:hidden">
<div style="position:absolute;left:0;top:0;width:13.3px;height:100%;background:rgba(0,0,0,0.05);"></div>
</div>
<svg style="position:absolute;left:88px;top:98px;" width="13.3" height="13" viewBox="0 0 13.3 13"><path d="M5.65 3.0 A4 4 0 0 1 5.65 10.0 M4.15 4.5 A2.5 2.5 0 0 1 4.15 8.5 M7.65 2.0 A5.5 5.5 0 0 1 7.65 11.0" fill="none" stroke="#fff" stroke-width="0.6" opacity="0.9"/></svg>
<div style="position:absolute;left:104.2px;top:101.64999999999999px;height:6.3px;line-height:6.3px;font-size:5.25px;color:#333;white-space:nowrap;font-style:italic">homeassistant</div>
<svg style="position:absolute;left:142.7px;top:101.2px" width="6.6" height="6.6"><circle cx="3.3" cy="3.3" r="1.9999999999999998" fill="#e2e2e2" stroke="#9a9a9a" stroke-width="0.6"/></svg>
<div style="position:absolute;left:91.3px;top:112.4px;width:5px;height:5px;background:#3e9b7c;border:0.5px solid #2f7a60;border-radius:1px"></div>
<div style="position:absolute;left:98px;top:112.17999999999999px;height:6.24px;line-height:6.24px;font-size:5.2px;color:#7a7a7a;white-space:nowrap;">connected</div>
<div style="position:absolute;left:141px;top:71.5px;width:61.599999999999994px;height:13.099999999999994px;background:#87a980;border:0.6px solid rgba(0,0,0,0.14);border-radius:1.8px;overflow:hidden">
<div style="position:absolute;right:0;top:0;width:10.5px;height:100%;background:rgba(0,0,0,0.05);"></div>
</div>
<svg style="position:absolute;left:192.1px;top:71.5px;" width="10.5" height="13.099999999999994" viewBox="0 0 10.5 13.099999999999994"><path d="M3.25 3.549999999999997 H7.25 M3.25 5.249999999999997 H7.25 M3.25 6.9499999999999975 H7.25 M3.25 8.649999999999997 H7.25 M3.25 10.349999999999998 H7.25" stroke="#fff" stroke-width="0.8"/></svg>
<div style="position:absolute;right:503.70000000000005px;top:75.19999999999999px;height:6.3px;line-height:6.3px;font-size:5.25px;color:#333;white-space:nowrap;">msg['payload']</div>
<svg style="position:absolute;left:137.7px;top:74.75px" width="6.6" height="6.6"><circle cx="3.3" cy="3.3" r="1.9999999999999998" fill="#e2e2e2" stroke="#9a9a9a" stroke-width="0.6"/></svg>
<div style="position:absolute;left:204.1px;top:73.1px;width:10px;height:10px;background:#fff;border:0.6px solid #bbb;border-radius:1.5px"></div>
<div style="position:absolute;left:205.7px;top:74.7px;width:6.8px;height:6.8px;background:#87a980;border:0.5px solid #6f8f68;border-radius:1px"></div>
<div style="position:absolute;left:167.2px;top:91.2px;width:44.70000000000002px;height:44.3px;background:#e2d96e;border:0.6px solid rgba(0,0,0,0.14);border-radius:1.8px;overflow:hidden">
<div style="position:absolute;left:0;top:0;width:13.3px;height:100%;background:rgba(0,0,0,0.05);"></div>
</div>
<svg style="position:absolute;left:167.2px;top:91.2px;" width="13.3" height="44.3" viewBox="0 0 13.3 44.3"><path d="M3.0500000000000003 22.15 H5.65 C7.25 22.15 6.95 17.95 9.65 17.95 M5.65 22.15 C7.25 22.15 6.95 26.349999999999998 9.65 26.349999999999998" fill="none" stroke="#fff" stroke-width="1.25"/></svg>
<div style="position:absolute;left:183.39999999999998px;top:110.49999999999999px;height:6.3px;line-height:6.3px;font-size:5.25px;color:#333;white-space:nowrap;">switch</div>
<svg style="position:absolute;left:163.7px;top:109.85px" width="7.0" height="7.0"><circle cx="3.5" cy="3.5" r="2.2" fill="#e2e2e2" stroke="#9a9a9a" stroke-width="0.6"/></svg>
<svg style="position:absolute;left:208.4px;top:93.9px" width="7.0" height="7.0"><circle cx="3.5" cy="3.5" r="2.2" fill="#e2e2e2" stroke="#9a9a9a" stroke-width="0.6"/></svg>
<svg style="position:absolute;left:208.4px;top:101.9px" width="7.0" height="7.0"><circle cx="3.5" cy="3.5" r="2.2" fill="#e2e2e2" stroke="#9a9a9a" stroke-width="0.6"/></svg>
<svg style="position:absolute;left:208.4px;top:109.9px" width="7.0" height="7.0"><circle cx="3.5" cy="3.5" r="2.2" fill="#e2e2e2" stroke="#9a9a9a" stroke-width="0.6"/></svg>
<svg style="position:absolute;left:208.4px;top:117.8px" width="7.0" height="7.0"><circle cx="3.5" cy="3.5" r="2.2" fill="#e2e2e2" stroke="#9a9a9a" stroke-width="0.6"/></svg>
<svg style="position:absolute;left:208.4px;top:125.80000000000001px" width="7.0" height="7.0"><circle cx="3.5" cy="3.5" r="2.2" fill="#e2e2e2" stroke="#9a9a9a" stroke-width="0.6"/></svg>
<div style="position:absolute;left:164px;top:107.48px;height:5.04px;line-height:5.04px;font-size:4.2px;color:#777;white-space:nowrap;">0</div>
<div style="position:absolute;left:213.2px;top:91.18px;height:5.04px;line-height:5.04px;font-size:4.2px;color:#777;white-space:nowrap;">0</div>
<div style="position:absolute;left:213.2px;top:99.18px;height:5.04px;line-height:5.04px;font-size:4.2px;color:#777;white-space:nowrap;">1</div>
<div style="position:absolute;left:213.2px;top:107.18px;height:5.04px;line-height:5.04px;font-size:4.2px;color:#777;white-space:nowrap;">2</div>
<div style="position:absolute;left:213.2px;top:115.08px;height:5.04px;line-height:5.04px;font-size:4.2px;color:#777;white-space:nowrap;">3</div>
<div style="position:absolute;left:213.2px;top:123.08000000000001px;height:5.04px;line-height:5.04px;font-size:4.2px;color:#777;white-space:nowrap;">4</div>
<div style="position:absolute;left:238px;top:85.2px;width:44.5px;height:13.099999999999994px;background:#debd5c;border:0.6px solid rgba(0,0,0,0.14);border-radius:1.8px;overflow:hidden">
<div style="position:absolute;left:0;top:0;width:13.3px;height:100%;background:rgba(0,0,0,0.05);"></div>
</div>
<svg style="position:absolute;left:238px;top:85.2px;" width="13.3" height="13.099999999999994" viewBox="0 0 13.3 13.099999999999994"><path d="M3.3500000000000005 1.7499999999999973 H7.95 L9.95 3.7499999999999973 V11.349999999999998 H3.3500000000000005 Z" fill="#fffbea"/><text x="6.65" y="8.249999999999996" font-size="5" text-anchor="middle" fill="#7a6a30" font-family="Liberation Sans">{}</text></svg>
<div style="position:absolute;left:254.2px;top:88.89999999999999px;height:6.3px;line-height:6.3px;font-size:5.25px;color:#333;white-space:nowrap;">json</div>
<svg style="position:absolute;left:234.5px;top:88.25px" width="7.0" height="7.0"><circle cx="3.5" cy="3.5" r="2.2" fill="#e2e2e2" stroke="#9a9a9a" stroke-width="0.6"/></svg>
<svg style="position:absolute;left:279.0px;top:88.25px" width="7.0" height="7.0"><circle cx="3.5" cy="3.5" r="2.2" fill="#e2e2e2" stroke="#9a9a9a" stroke-width="0.6"/></svg>
<div style="position:absolute;left:238px;top:98.3px;width:44.5px;height:13.099999999999994px;background:#debd5c;border:0.6px solid rgba(0,0,0,0.14);border-radius:1.8px;overflow:hidden">
<div style="position:absolute;left:0;top:0;width:13.3px;height:100%;background:rgba(0,0,0,0.05);"></div>
</div>
<svg style="position:absolute;left:238px;top:98.3px;" width="13.3" height="13.099999999999994" viewBox="0 0 13.3 13.099999999999994"><path d="M3.3500000000000005 1.7499999999999973 H7.95 L9.95 3.7499999999999973 V11.349999999999998 H3.3500000000000005 Z" fill="#fffbea"/><text x="6.65" y="8.249999999999996" font-size="5" text-anchor="middle" fill="#7a6a30" font-family="Liberation Sans">{}</text></svg>
<div style="position:absolute;left:254.2px;top:101.99999999999999px;height:6.3px;line-height:6.3px;font-size:5.25px;color:#333;white-space:nowrap;">json</div>
<svg style="position:absolute;left:234.5px;top:101.35px" width="7.0" height="7.0"><circle cx="3.5" cy="3.5" r="2.2" fill="#e2e2e2" stroke="#9a9a9a" stroke-width="0.6"/></svg>
<svg style="position:absolute;left:279.0px;top:101.35px" width="7.0" height="7.0"><circle cx="3.5" cy="3.5" r="2.2" fill="#e2e2e2" stroke="#9a9a9a" stroke-width="0.6"/></svg>
<div style="position:absolute;left:238px;top:111.4px;width:44.5px;height:13.099999999999994px;background:#debd5c;border:0.6px solid rgba(0,0,0,0.14);border-radius:1.8px;overflow:hidden">
<div style="position:absolute;left:0;top:0;width:13.3px;height:100%;background:rgba(0,0,0,0.05);"></div>
</div>
<svg style="position:absolute;left:238px;top:111.4px;" width="13.3" height="13.099999999999994" viewBox="0 0 13.3 13.099999999999994"><path d="M3.3500000000000005 1.7499999999999973 H7.95 L9.95 3.7499999999999973 V11.349999999999998 H3.3500000000000005 Z" fill="#fffbea"/><text x="6.65" y="8.249999999999996" font-size="5" text-anchor="middle" fill="#7a6a30" font-family="Liberation Sans">{}</text></svg>
<div style="position:absolute;left:254.2px;top:115.1px;height:6.3px;line-height:6.3px;font-size:5.25px;color:#333;white-space:nowrap;">json</div>
<svg style="position:absolute;left:234.5px;top:114.45px" width="7.0" height="7.0"><circle cx="3.5" cy="3.5" r="2.2" fill="#e2e2e2" stroke="#9a9a9a" stroke-width="0.6"/></svg>
<svg style="position:absolute;left:279.0px;top:114.45px" width="7.0" height="7.0"><circle cx="3.5" cy="3.5" r="2.2" fill="#e2e2e2" stroke="#9a9a9a" stroke-width="0.6"/></svg>
<div style="position:absolute;left:238px;top:124.5px;width:44.5px;height:13.099999999999994px;background:#debd5c;border:0.6px solid rgba(0,0,0,0.14);border-radius:1.8px;overflow:hidden">
<div style="position:absolute;left:0;top:0;width:13.3px;height:100%;background:rgba(0,0,0,0.05);"></div>
</div>
<svg style="position:absolute;left:238px;top:124.5px;" width="13.3" height="13.099999999999994" viewBox="0 0 13.3 13.099999999999994"><path d="M3.3500000000000005 1.7499999999999973 H7.95 L9.95 3.7499999999999973 V11.349999999999998 H3.3500000000000005 Z" fill="#fffbea"/><text x="6.65" y="8.249999999999996" font-size="5" text-anchor="middle" fill="#7a6a30" font-family="Liberation Sans">{}</text></svg>
<div style="position:absolute;left:254.2px;top:128.20000000000002px;height:6.3px;line-height:6.3px;font-size:5.25px;color:#333;white-space:nowrap;">json</div>
<svg style="position:absolute;left:234.5px;top:127.55000000000001px" width="7.0" height="7.0"><circle cx="3.5" cy="3.5" r="2.2" fill="#e2e2e2" stroke="#9a9a9a" stroke-width="0.6"/></svg>
<svg style="position:absolute;left:279.0px;top:127.55000000000001px" width="7.0" height="7.0"><circle cx="3.5" cy="3.5" r="2.2" fill="#e2e2e2" stroke="#9a9a9a" stroke-width="0.6"/></svg>
<div style="position:absolute;left:238px;top:137.6px;width:44.5px;height:13.099999999999994px;background:#debd5c;border:0.6px solid rgba(0,0,0,0.14);border-radius:1.8px;overflow:hidden">
<div style="position:absolute;left:0;top:0;width:13.3px;height:100%;background:rgba(0,0,0,0.05);"></div>
</div>
<svg style="position:absolute;left:238px;top:137.6px;" width="13.3" height="13.099999999999994" viewBox="0 0 13.3 13.099999999999994"><path d="M3.3500000000000005 1.7499999999999973 H7.95 L9.95 3.7499999999999973 V11.349999999999998 H3.3500000000000005 Z" fill="#fffbea"/><text x="6.65" y="8.249999999999996" font-size="5" text-anchor="middle" fill="#7a6a30" font-family="Liberation Sans">{}</text></svg>
<div style="position:absolute;left:254.2px;top:141.29999999999998px;height:6.3px;line-height:6.3px;font-size:5.25px;color:#333;white-space:nowrap;">json</div>
<svg style="position:absolute;left:234.5px;top:140.64999999999998px" width="7.0" height="7.0"><circle cx="3.5" cy="3.5" r="2.2" fill="#e2e2e2" stroke="#9a9a9a" stroke-width="0.6"/></svg>
<svg style="position:absolute;left:279.0px;top:140.65px" width="7.0" height="7.0"><circle cx="3.5" cy="3.5" r="2.2" fill="#e2e2e2" stroke="#9a9a9a" stroke-width="0.6"/></svg>
<div style="position:absolute;left:313.3px;top:73.5px;width:43.5px;height:17.799999999999997px;background:#e2d96e;border:0.6px solid rgba(0,0,0,0.14);border-radius:1.8px;overflow:hidden">
<div style="position:absolute;left:0;top:0;width:13.3px;height:100%;background:rgba(0,0,0,0.05);"></div>
</div>
<svg style="position:absolute;left:313.3px;top:73.5px;" width="13.3" height="17.799999999999997" viewBox="0 0 13.3 17.799999999999997"><path d="M3.0500000000000003 8.899999999999999 H5.65 C7.25 8.899999999999999 6.95 4.699999999999998 9.65 4.699999999999998 M5.65 8.899999999999999 C7.25 8.899999999999999 6.95 13.099999999999998 9.65 13.099999999999998" fill="none" stroke="#fff" stroke-width="1.25"/></svg>
<div style="position:absolute;left:329.5px;top:79.55px;height:6.3px;line-height:6.3px;font-size:5.25px;color:#333;white-space:nowrap;">switch</div>
<svg style="position:absolute;left:309.8px;top:78.9px" width="7.0" height="7.0"><circle cx="3.5" cy="3.5" r="2.2" fill="#e2e2e2" stroke="#9a9a9a" stroke-width="0.6"/></svg>
<svg style="position:absolute;left:353.3px;top:75.0px" width="7.0" height="7.0"><circle cx="3.5" cy="3.5" r="2.2" fill="#e2e2e2" stroke="#9a9a9a" stroke-width="0.6"/></svg>
<svg style="position:absolute;left:353.3px;top:83.0px" width="7.0" height="7.0"><circle cx="3.5" cy="3.5" r="2.2" fill="#e2e2e2" stroke="#9a9a9a" stroke-width="0.6"/></svg>
<div style="position:absolute;left:309.6px;top:75.58px;height:5.04px;line-height:5.04px;font-size:4.2px;color:#777;white-space:nowrap;">0</div>
<div style="position:absolute;left:358.5px;top:72.28px;height:5.04px;line-height:5.04px;font-size:4.2px;color:#777;white-space:nowrap;">0</div>
<div style="position:absolute;left:358.5px;top:80.78px;height:5.04px;line-height:5.04px;font-size:4.2px;color:#777;white-space:nowrap;">1</div>
<div style="position:absolute;left:313.3px;top:94.0px;width:43.5px;height:17.799999999999997px;background:#e2d96e;border:0.6px solid rgba(0,0,0,0.14);border-radius:1.8px;overflow:hidden">
<div style="position:absolute;left:0;top:0;width:13.3px;height:100%;background:rgba(0,0,0,0.05);"></div>
</div>
<svg style="position:absolute;left:313.3px;top:94.0px;" width="13.3" height="17.799999999999997" viewBox="0 0 13.3 17.799999999999997"><path d="M3.0500000000000003 8.899999999999999 H5.65 C7.25 8.899999999999999 6.95 4.699999999999998 9.65 4.699999999999998 M5.65 8.899999999999999 C7.25 8.899999999999999 6.95 13.099999999999998 9.65 13.099999999999998" fill="none" stroke="#fff" stroke-width="1.25"/></svg>
<div style="position:absolute;left:329.5px;top:100.05px;height:6.3px;line-height:6.3px;font-size:5.25px;color:#333;white-space:nowrap;">switch</div>
<svg style="position:absolute;left:309.8px;top:99.4px" width="7.0" height="7.0"><circle cx="3.5" cy="3.5" r="2.2" fill="#e2e2e2" stroke="#9a9a9a" stroke-width="0.6"/></svg>
<svg style="position:absolute;left:353.3px;top:95.5px" width="7.0" height="7.0"><circle cx="3.5" cy="3.5" r="2.2" fill="#e2e2e2" stroke="#9a9a9a" stroke-width="0.6"/></svg>
<svg style="position:absolute;left:353.3px;top:103.5px" width="7.0" height="7.0"><circle cx="3.5" cy="3.5" r="2.2" fill="#e2e2e2" stroke="#9a9a9a" stroke-width="0.6"/></svg>
<div style="position:absolute;left:309.6px;top:96.08px;height:5.04px;line-height:5.04px;font-size:4.2px;color:#777;white-space:nowrap;">0</div>
<div style="position:absolute;left:358.5px;top:92.78px;height:5.04px;line-height:5.04px;font-size:4.2px;color:#777;white-space:nowrap;">0</div>
<div style="position:absolute;left:358.5px;top:101.28px;height:5.04px;line-height:5.04px;font-size:4.2px;color:#777;white-space:nowrap;">1</div>
<div style="position:absolute;left:313.3px;top:114.3px;width:43.5px;height:17.799999999999997px;background:#e2d96e;border:0.6px solid rgba(0,0,0,0.14);border-radius:1.8px;overflow:hidden">
<div style="position:absolute;left:0;top:0;width:13.3px;height:100%;background:rgba(0,0,0,0.05);"></div>
</div>
<svg style="position:absolute;left:313.3px;top:114.3px;" width="13.3" height="17.799999999999997" viewBox="0 0 13.3 17.799999999999997"><path d="M3.0500000000000003 8.899999999999999 H5.65 C7.25 8.899999999999999 6.95 4.699999999999998 9.65 4.699999999999998 M5.65 8.899999999999999 C7.25 8.899999999999999 6.95 13.099999999999998 9.65 13.099999999999998" fill="none" stroke="#fff" stroke-width="1.25"/></svg>
<div style="position:absolute;left:329.5px;top:120.34999999999998px;height:6.3px;line-height:6.3px;font-size:5.25px;color:#333;white-space:nowrap;">switch</div>
<svg style="position:absolute;left:309.8px;top:119.69999999999999px" width="7.0" height="7.0"><circle cx="3.5" cy="3.5" r="2.2" fill="#e2e2e2" stroke="#9a9a9a" stroke-width="0.6"/></svg>
<svg style="position:absolute;left:353.3px;top:115.8px" width="7.0" height="7.0"><circle cx="3.5" cy="3.5" r="2.2" fill="#e2e2e2" stroke="#9a9a9a" stroke-width="0.6"/></svg>
<svg style="position:absolute;left:353.3px;top:123.8px" width="7.0" height="7.0"><circle cx="3.5" cy="3.5" r="2.2" fill="#e2e2e2" stroke="#9a9a9a" stroke-width="0.6"/></svg>
<div style="position:absolute;left:309.6px;top:116.38px;height:5.04px;line-height:5.04px;font-size:4.2px;color:#777;white-space:nowrap;">0</div>
<div style="position:absolute;left:358.5px;top:113.08px;height:5.04px;line-height:5.04px;font-size:4.2px;color:#777;white-space:nowrap;">0</div>
<div style="position:absolute;left:358.5px;top:121.58px;height:5.04px;line-height:5.04px;font-size:4.2px;color:#777;white-space:nowrap;">1</div>
<div style="position:absolute;left:313.3px;top:135.2px;width:43.5px;height:17.80000000000001px;background:#e2d96e;border:0.6px solid rgba(0,0,0,0.14);border-radius:1.8px;overflow:hidden">
<div style="position:absolute;left:0;top:0;width:13.3px;height:100%;background:rgba(0,0,0,0.05);"></div>
</div>
<svg style="position:absolute;left:313.3px;top:135.2px;" width="13.3" height="17.80000000000001" viewBox="0 0 13.3 17.80000000000001"><path d="M3.0500000000000003 8.900000000000006 H5.65 C7.25 8.900000000000006 6.95 4.7000000000000055 9.65 4.7000000000000055 M5.65 8.900000000000006 C7.25 8.900000000000006 6.95 13.100000000000005 9.65 13.100000000000005" fill="none" stroke="#fff" stroke-width="1.25"/></svg>
<div style="position:absolute;left:329.5px;top:141.25px;height:6.3px;line-height:6.3px;font-size:5.25px;color:#333;white-space:nowrap;">switch</div>
<svg style="position:absolute;left:309.8px;top:140.6px" width="7.0" height="7.0"><circle cx="3.5" cy="3.5" r="2.2" fill="#e2e2e2" stroke="#9a9a9a" stroke-width="0.6"/></svg>
<svg style="position:absolute;left:353.3px;top:136.7px" width="7.0" height="7.0"><circle cx="3.5" cy="3.5" r="2.2" fill="#e2e2e2" stroke="#9a9a9a" stroke-width="0.6"/></svg>
<svg style="position:absolute;left:353.3px;top:144.7px" width="7.0" height="7.0"><circle cx="3.5" cy="3.5" r="2.2" fill="#e2e2e2" stroke="#9a9a9a" stroke-width="0.6"/></svg>
<div style="position:absolute;left:309.6px;top:137.27999999999997px;height:5.04px;line-height:5.04px;font-size:4.2px;color:#777;white-space:nowrap;">0</div>
<div style="position:absolute;left:358.5px;top:133.98px;height:5.04px;line-height:5.04px;font-size:4.2px;color:#777;white-space:nowrap;">0</div>
<div style="position:absolute;left:358.5px;top:142.48px;height:5.04px;line-height:5.04px;font-size:4.2px;color:#777;white-space:nowrap;">1</div>
<div style="position:absolute;left:313.3px;top:159.1px;width:52.89999999999998px;height:13.099999999999994px;background:#e2d96e;border:0.6px solid rgba(0,0,0,0.14);border-radius:1.8px;overflow:hidden">
<div style="position:absolute;left:0;top:0;width:13.3px;height:100%;background:rgba(0,0,0,0.05);"></div>
</div>
<svg style="position:absolute;left:313.3px;top:159.1px;" width="13.3" height="13.099999999999994" viewBox="0 0 13.3 13.099999999999994"><path d="M3.0500000000000003 6.549999999999997 H5.65 C7.25 6.549999999999997 6.95 2.349999999999997 9.65 2.349999999999997 M5.65 6.549999999999997 C7.25 6.549999999999997 6.95 10.749999999999996 9.65 10.749999999999996" fill="none" stroke="#fff" stroke-width="1.25"/></svg>
<div style="position:absolute;left:329.5px;top:162.79999999999998px;height:6.3px;line-height:6.3px;font-size:5.25px;color:#333;white-space:nowrap;">json-switch</div>
<svg style="position:absolute;left:309.8px;top:162.14999999999998px" width="7.0" height="7.0"><circle cx="3.5" cy="3.5" r="2.2" fill="#e2e2e2" stroke="#9a9a9a" stroke-width="0.6"/></svg>
<svg style="position:absolute;left:362.7px;top:162.2px" width="7.0" height="7.0"><circle cx="3.5" cy="3.5" r="2.2" fill="#e2e2e2" stroke="#9a9a9a" stroke-width="0.6"/></svg>
<div style="position:absolute;left:370px;top:80.3px;width:14.399999999999977px;height:12.900000000000006px;background:#e2d96e;border:0.6px solid rgba(0,0,0,0.14);border-radius:1.8px;overflow:hidden">
<div style="position:absolute;left:0;top:0;width:14.4px;height:100%;background:transparent;"></div>
</div>
<svg style="position:absolute;left:370px;top:80.3px;" width="14.4" height="12.900000000000006" viewBox="0 0 14.4 12.900000000000006"><path d="M7.2 2.950000000000003 V7.450000000000003" stroke="#fff" stroke-width="1.6"/><circle cx="7.2" cy="9.450000000000003" r="0.8" fill="#fff"/></svg>
<svg style="position:absolute;left:366.5px;top:83.25px" width="7.0" height="7.0"><circle cx="3.5" cy="3.5" r="2.2" fill="#e2e2e2" stroke="#9a9a9a" stroke-width="0.6"/></svg>
<svg style="position:absolute;left:380.9px;top:83.25px" width="7.0" height="7.0"><circle cx="3.5" cy="3.5" r="2.2" fill="#e2e2e2" stroke="#9a9a9a" stroke-width="0.6"/></svg>
<div style="position:absolute;left:370px;top:99.7px;width:14.399999999999977px;height:12.900000000000006px;background:#e2d96e;border:0.6px solid rgba(0,0,0,0.14);border-radius:1.8px;overflow:hidden">
<div style="position:absolute;left:0;top:0;width:14.4px;height:100%;background:transparent;"></div>
</div>
<svg style="position:absolute;left:370px;top:99.7px;" width="14.4" height="12.900000000000006" viewBox="0 0 14.4 12.900000000000006"><path d="M7.2 2.950000000000003 V7.450000000000003" stroke="#fff" stroke-width="1.6"/><circle cx="7.2" cy="9.450000000000003" r="0.8" fill="#fff"/></svg>
<svg style="position:absolute;left:366.5px;top:102.65px" width="7.0" height="7.0"><circle cx="3.5" cy="3.5" r="2.2" fill="#e2e2e2" stroke="#9a9a9a" stroke-width="0.6"/></svg>
<svg style="position:absolute;left:380.9px;top:102.65px" width="7.0" height="7.0"><circle cx="3.5" cy="3.5" r="2.2" fill="#e2e2e2" stroke="#9a9a9a" stroke-width="0.6"/></svg>
<div style="position:absolute;left:370px;top:120.5px;width:14.399999999999977px;height:12.900000000000006px;background:#e2d96e;border:0.6px solid rgba(0,0,0,0.14);border-radius:1.8px;overflow:hidden">
<div style="position:absolute;left:0;top:0;width:14.4px;height:100%;background:transparent;"></div>
</div>
<svg style="position:absolute;left:370px;top:120.5px;" width="14.4" height="12.900000000000006" viewBox="0 0 14.4 12.900000000000006"><path d="M7.2 2.950000000000003 V7.450000000000003" stroke="#fff" stroke-width="1.6"/><circle cx="7.2" cy="9.450000000000003" r="0.8" fill="#fff"/></svg>
<svg style="position:absolute;left:366.5px;top:123.45px" width="7.0" height="7.0"><circle cx="3.5" cy="3.5" r="2.2" fill="#e2e2e2" stroke="#9a9a9a" stroke-width="0.6"/></svg>
<svg style="position:absolute;left:380.9px;top:123.45px" width="7.0" height="7.0"><circle cx="3.5" cy="3.5" r="2.2" fill="#e2e2e2" stroke="#9a9a9a" stroke-width="0.6"/></svg>
<div style="position:absolute;left:370px;top:142.3px;width:14.399999999999977px;height:12.900000000000006px;background:#e2d96e;border:0.6px solid rgba(0,0,0,0.14);border-radius:1.8px;overflow:hidden">
<div style="position:absolute;left:0;top:0;width:14.4px;height:100%;background:transparent;"></div>
</div>
<svg style="position:absolute;left:370px;top:142.3px;" width="14.4" height="12.900000000000006" viewBox="0 0 14.4 12.900000000000006"><path d="M7.2 2.950000000000003 V7.450000000000003" stroke="#fff" stroke-width="1.6"/><circle cx="7.2" cy="9.450000000000003" r="0.8" fill="#fff"/></svg>
<svg style="position:absolute;left:366.5px;top:145.25px" width="7.0" height="7.0"><circle cx="3.5" cy="3.5" r="2.2" fill="#e2e2e2" stroke="#9a9a9a" stroke-width="0.6"/></svg>
<svg style="position:absolute;left:380.9px;top:145.25px" width="7.0" height="7.0"><circle cx="3.5" cy="3.5" r="2.2" fill="#e2e2e2" stroke="#9a9a9a" stroke-width="0.6"/></svg>
<div style="position:absolute;left:401.3px;top:76.0px;width:106.09999999999997px;height:13.0px;background:#a6bbcf;border:0.6px solid rgba(0,0,0,0.14);border-radius:1.8px;overflow:hidden">
<div style="position:absolute;right:0;top:0;width:13px;height:100%;background:rgba(0,0,0,0.05);"></div>
</div>
<svg style="position:absolute;left:494.4px;top:76.0px;" width="13" height="13.0" viewBox="0 0 13 13.0"><path d="M3.7 5.0 H6.3 V2.7 L9.5 6.5 L6.3 10.3 V8.0 H3.7 Z" fill="#fff"/></svg>
<div style="position:absolute;right:198.90000000000003px;top:79.64999999999999px;height:6.3px;line-height:6.3px;font-size:5.25px;color:#333;white-space:nowrap;">Beleuchtung Pool | 166, 1, STATE</div>
<svg style="position:absolute;left:397.90000000000003px;top:79.1px" width="6.8" height="6.8"><circle cx="3.4" cy="3.4" r="2.1" fill="#e2e2e2" stroke="#9a9a9a" stroke-width="0.6"/></svg>
<svg style="position:absolute;left:504.4px;top:79.5px;" width="6" height="6" viewBox="0 0 6 6"><rect x="1.1" y="1.1" width="3.8" height="3.8" rx="0.6" fill="#dedede" stroke="#999" stroke-width="0.6"/></svg>
<div style="position:absolute;left:510.0px;top:77.0px;height:5.3999999999999995px;line-height:5.3999999999999995px;font-size:4.5px;color:#808080;white-space:nowrap;">RSLT</div>
<div style="position:absolute;left:401.3px;top:98.2px;width:88.80000000000001px;height:13.0px;background:#a6bbcf;border:0.6px solid rgba(0,0,0,0.14);border-radius:1.8px;overflow:hidden">
<div style="position:absolute;right:0;top:0;width:13px;height:100%;background:rgba(0,0,0,0.05);"></div>
</div>
<svg style="position:absolute;left:477.1px;top:98.2px;" width="13" height="13.0" viewBox="0 0 13 13.0"><path d="M3.7 5.0 H6.3 V2.7 L9.5 6.5 L6.3 10.3 V8.0 H3.7 Z" fill="#fff"/></svg>
<div style="position:absolute;right:216.2px;top:101.85px;height:6.3px;line-height:6.3px;font-size:5.25px;color:#333;white-space:nowrap;">Zirkulation | 167, 1, STATE</div>
<svg style="position:absolute;left:397.90000000000003px;top:101.3px" width="6.8" height="6.8"><circle cx="3.4" cy="3.4" r="2.1" fill="#e2e2e2" stroke="#9a9a9a" stroke-width="0.6"/></svg>
<svg style="position:absolute;left:487.1px;top:101.7px;" width="6" height="6" viewBox="0 0 6 6"><rect x="1.1" y="1.1" width="3.8" height="3.8" rx="0.6" fill="#dedede" stroke="#999" stroke-width="0.6"/></svg>
<div style="position:absolute;left:492.70000000000005px;top:99.2px;height:5.3999999999999995px;line-height:5.3999999999999995px;font-size:4.5px;color:#808080;white-space:nowrap;">RSLT</div>
<div style="position:absolute;left:401.3px;top:120.2px;width:88.80000000000001px;height:12.999999999999986px;background:#a6bbcf;border:0.6px solid rgba(0,0,0,0.14);border-radius:1.8px;overflow:hidden">
<div style="position:absolute;right:0;top:0;width:13px;height:100%;background:rgba(0,0,0,0.05);"></div>
</div>
<svg style="position:absolute;left:477.1px;top:120.2px;" width="13" height="12.999999999999986" viewBox="0 0 13 12.999999999999986"><path d="M3.7 4.999999999999993 H6.3 V2.699999999999993 L9.5 6.499999999999993 L6.3 10.299999999999994 V7.999999999999993 H3.7 Z" fill="#fff"/></svg>
<div style="position:absolute;right:216.2px;top:123.84999999999998px;height:6.3px;line-height:6.3px;font-size:5.25px;color:#333;white-space:nowrap;">Pumpe 1 | 167, 2, STATE</div>
<svg style="position:absolute;left:397.90000000000003px;top:123.29999999999998px" width="6.8" height="6.8"><circle cx="3.4" cy="3.4" r="2.1" fill="#e2e2e2" stroke="#9a9a9a" stroke-width="0.6"/></svg>
<svg style="position:absolute;left:487.1px;top:123.7px;" width="6" height="6" viewBox="0 0 6 6"><rect x="1.1" y="1.1" width="3.8" height="3.8" rx="0.6" fill="#dedede" stroke="#999" stroke-width="0.6"/></svg>
<div style="position:absolute;left:492.70000000000005px;top:121.2px;height:5.3999999999999995px;line-height:5.3999999999999995px;font-size:4.5px;color:#808080;white-space:nowrap;">RSLT</div>
<div style="position:absolute;left:401.3px;top:142.3px;width:88.80000000000001px;height:13.0px;background:#a6bbcf;border:0.6px solid rgba(0,0,0,0.14);border-radius:1.8px;overflow:hidden">
<div style="position:absolute;right:0;top:0;width:13px;height:100%;background:rgba(0,0,0,0.05);"></div>
</div>
<svg style="position:absolute;left:477.1px;top:142.3px;" width="13" height="13.0" viewBox="0 0 13 13.0"><path d="M3.7 5.0 H6.3 V2.7 L9.5 6.5 L6.3 10.3 V8.0 H3.7 Z" fill="#fff"/></svg>
<div style="position:absolute;right:216.2px;top:145.95000000000002px;height:6.3px;line-height:6.3px;font-size:5.25px;color:#333;white-space:nowrap;">Pumpe 2 | 167, 3, STATE</div>
<svg style="position:absolute;left:397.90000000000003px;top:145.4px" width="6.8" height="6.8"><circle cx="3.4" cy="3.4" r="2.1" fill="#e2e2e2" stroke="#9a9a9a" stroke-width="0.6"/></svg>
<svg style="position:absolute;left:487.1px;top:145.8px;" width="6" height="6" viewBox="0 0 6 6"><rect x="1.1" y="1.1" width="3.8" height="3.8" rx="0.6" fill="#dedede" stroke="#999" stroke-width="0.6"/></svg>
<div style="position:absolute;left:492.70000000000005px;top:143.3px;height:5.3999999999999995px;line-height:5.3999999999999995px;font-size:4.5px;color:#808080;white-space:nowrap;">RSLT</div>
<div style="position:absolute;left:401.3px;top:164px;width:139.7px;height:12.7px;background:#a6bbcf;border:0.6px solid rgba(0,0,0,0.14);border-right:none;border-radius:1.8px 0 0 1.8px"></div>
<div style="position:absolute;left:411px;top:167.65px;height:6.3px;line-height:6.3px;font-size:5.25px;color:#333;white-space:nowrap;">Temperatur Pool | 168, 1, ACTUAL_TEMPERATURE</div>
<svg style="position:absolute;left:398.1px;top:167.10000000000002px" width="6.4" height="6.4"><circle cx="3.2" cy="3.2" r="1.9000000000000001" fill="#e2e2e2" stroke="#9a9a9a" stroke-width="0.6"/></svg>
<div style="position:absolute;left:392.3px;top:186.1px;width:61.599999999999966px;height:12.800000000000011px;background:#87a980;border:0.6px solid rgba(0,0,0,0.14);border-radius:1.8px;overflow:hidden">
<div style="position:absolute;right:0;top:0;width:10.5px;height:100%;background:rgba(0,0,0,0.05);"></div>
</div>
<svg style="position:absolute;left:443.4px;top:186.1px;" width="10.5" height="12.800000000000011" viewBox="0 0 10.5 12.800000000000011"><path d="M3.25 3.4000000000000057 H7.25 M3.25 5.100000000000006 H7.25 M3.25 6.800000000000006 H7.25 M3.25 8.500000000000005 H7.25 M3.25 10.200000000000006 H7.25" stroke="#fff" stroke-width="0.8"/></svg>
<div style="position:absolute;right:252.40000000000003px;top:189.65px;height:6.3px;line-height:6.3px;font-size:5.25px;color:#333;white-space:nowrap;">msg['payload']</div>
<svg style="position:absolute;left:389.0px;top:189.2px" width="6.6" height="6.6"><circle cx="3.3" cy="3.3" r="1.9999999999999998" fill="#e2e2e2" stroke="#9a9a9a" stroke-width="0.6"/></svg>
<div style="position:absolute;left:455.4px;top:187.7px;width:10px;height:10px;background:#fff;border:0.6px solid #bbb;border-radius:1.5px"></div>
<div style="position:absolute;left:457.0px;top:189.29999999999998px;width:6.8px;height:6.8px;background:#87a980;border:0.5px solid #6f8f68;border-radius:1px"></div>
<div style="position:absolute;left:392.3px;top:208.2px;width:61.599999999999966px;height:12.700000000000017px;background:#87a980;border:0.6px solid rgba(0,0,0,0.14);border-radius:1.8px;overflow:hidden">
<div style="position:absolute;right:0;top:0;width:10.5px;height:100%;background:rgba(0,0,0,0.05);"></div>
</div>
<svg style="position:absolute;left:443.4px;top:208.2px;" width="10.5" height="12.700000000000017" viewBox="0 0 10.5 12.700000000000017"><path d="M3.25 3.3500000000000085 H7.25 M3.25 5.050000000000009 H7.25 M3.25 6.750000000000009 H7.25 M3.25 8.450000000000008 H7.25 M3.25 10.15000000000001 H7.25" stroke="#fff" stroke-width="0.8"/></svg>
<div style="position:absolute;right:252.40000000000003px;top:211.70000000000002px;height:6.3px;line-height:6.3px;font-size:5.25px;color:#333;white-space:nowrap;">msg['payload']</div>
<svg style="position:absolute;left:389.0px;top:211.25px" width="6.6" height="6.6"><circle cx="3.3" cy="3.3" r="1.9999999999999998" fill="#e2e2e2" stroke="#9a9a9a" stroke-width="0.6"/></svg>
<div style="position:absolute;left:455.4px;top:209.79999999999998px;width:10px;height:10px;background:#fff;border:0.6px solid #bbb;border-radius:1.5px"></div>
<div style="position:absolute;left:457.0px;top:211.39999999999998px;width:6.8px;height:6.8px;background:#87a980;border:0.5px solid #6f8f68;border-radius:1px"></div>
<div style="position:absolute;left:135px;top:228.8px;height:5.3999999999999995px;line-height:5.3999999999999995px;font-size:4.5px;color:#707070;white-space:nowrap;">0: false</div>
<div style="position:absolute;left:120px;top:235.90000000000003px;height:5.3999999999999995px;line-height:5.3999999999999995px;font-size:4.5px;color:#808080;white-space:nowrap;">TRG</div>
<div style="position:absolute;left:131.7px;top:234.3px;width:106.70000000000002px;height:13.099999999999994px;background:#a6bbcf;border:0.6px solid rgba(0,0,0,0.14);border-radius:1.8px;overflow:hidden">
<div style="position:absolute;left:0;top:0;width:13.3px;height:100%;background:rgba(0,0,0,0.05);"></div>
</div>
<svg style="position:absolute;left:131.7px;top:234.3px;" width="13.3" height="13.099999999999994" viewBox="0 0 13.3 13.099999999999994"><path d="M3.8500000000000005 5.049999999999997 H6.45 V2.7499999999999973 L9.65 6.549999999999997 L6.45 10.349999999999998 V8.049999999999997 H3.8500000000000005 Z" fill="#fff"/></svg>
<div style="position:absolute;left:147.89999999999998px;top:238.00000000000003px;height:6.3px;line-height:6.3px;font-size:5.25px;color:#333;white-space:nowrap;">Beleuchtung Pool | 166, 1, STATE</div>
<svg style="position:absolute;left:128.7px;top:237.85000000000002px;" width="6" height="6" viewBox="0 0 6 6"><rect x="1.1" y="1.1" width="3.8" height="3.8" rx="0.6" fill="#dedede" stroke="#999" stroke-width="0.6"/></svg>
<svg style="position:absolute;left:234.9px;top:237.35000000000002px" width="7.0" height="7.0"><circle cx="3.5" cy="3.5" r="2.2" fill="#e2e2e2" stroke="#9a9a9a" stroke-width="0.6"/></svg>
<div style="position:absolute;left:313.3px;top:234.3px;width:44.0px;height:13.099999999999994px;background:#f3b567;border:0.6px solid rgba(0,0,0,0.14);border-radius:1.8px;overflow:hidden">
<div style="position:absolute;left:0;top:0;width:13.3px;height:100%;background:rgba(0,0,0,0.05);"></div>
</div>
<svg style="position:absolute;left:313.3px;top:234.3px;" width="13.3" height="13.099999999999994" viewBox="0 0 13.3 13.099999999999994"><path d="M8.450000000000001 2.2499999999999973 Q6.3500000000000005 2.2499999999999973 6.3500000000000005 4.249999999999997 V5.4499999999999975 Q6.3500000000000005 6.549999999999997 4.95 6.549999999999997 Q6.3500000000000005 6.549999999999997 6.3500000000000005 7.649999999999997 V8.849999999999998 Q6.3500000000000005 10.849999999999998 8.450000000000001 10.849999999999998" fill="none" stroke="#fffbe8" stroke-width="1.15"/></svg>
<div style="position:absolute;left:329.5px;top:238.00000000000003px;height:6.3px;line-height:6.3px;font-size:5.25px;color:#333;white-space:nowrap;">Wert</div>
<svg style="position:absolute;left:309.8px;top:237.35000000000002px" width="7.0" height="7.0"><circle cx="3.5" cy="3.5" r="2.2" fill="#e2e2e2" stroke="#9a9a9a" stroke-width="0.6"/></svg>
<svg style="position:absolute;left:353.8px;top:237.35000000000002px" width="7.0" height="7.0"><circle cx="3.5" cy="3.5" r="2.2" fill="#e2e2e2" stroke="#9a9a9a" stroke-width="0.6"/></svg>
<div style="position:absolute;left:135px;top:250.89999999999998px;height:5.3999999999999995px;line-height:5.3999999999999995px;font-size:4.5px;color:#707070;white-space:nowrap;">0: true</div>
<div style="position:absolute;left:120px;top:258.0px;height:5.3999999999999995px;line-height:5.3999999999999995px;font-size:4.5px;color:#808080;white-space:nowrap;">TRG</div>
<div style="position:absolute;left:131.7px;top:256.4px;width:89.20000000000002px;height:13.100000000000023px;background:#a6bbcf;border:0.6px solid rgba(0,0,0,0.14);border-radius:1.8px;overflow:hidden">
<div style="position:absolute;left:0;top:0;width:13.3px;height:100%;background:rgba(0,0,0,0.05);"></div>
</div>
<svg style="position:absolute;left:131.7px;top:256.4px;" width="13.3" height="13.100000000000023" viewBox="0 0 13.3 13.100000000000023"><path d="M3.8500000000000005 5.050000000000011 H6.45 V2.7500000000000115 L9.65 6.550000000000011 L6.45 10.350000000000012 V8.050000000000011 H3.8500000000000005 Z" fill="#fff"/></svg>
<div style="position:absolute;left:147.89999999999998px;top:260.1px;height:6.3px;line-height:6.3px;font-size:5.25px;color:#333;white-space:nowrap;">Zirkulation | 167, 1, STATE</div>
<svg style="position:absolute;left:128.7px;top:259.95px;" width="6" height="6" viewBox="0 0 6 6"><rect x="1.1" y="1.1" width="3.8" height="3.8" rx="0.6" fill="#dedede" stroke="#999" stroke-width="0.6"/></svg>
<svg style="position:absolute;left:217.4px;top:259.45px" width="7.0" height="7.0"><circle cx="3.5" cy="3.5" r="2.2" fill="#e2e2e2" stroke="#9a9a9a" stroke-width="0.6"/></svg>
<div style="position:absolute;left:313.3px;top:256.4px;width:44.0px;height:13.100000000000023px;background:#f3b567;border:0.6px solid rgba(0,0,0,0.14);border-radius:1.8px;overflow:hidden">
<div style="position:absolute;left:0;top:0;width:13.3px;height:100%;background:rgba(0,0,0,0.05);"></div>
</div>
<svg style="position:absolute;left:313.3px;top:256.4px;" width="13.3" height="13.100000000000023" viewBox="0 0 13.3 13.100000000000023"><path d="M8.450000000000001 2.2500000000000115 Q6.3500000000000005 2.2500000000000115 6.3500000000000005 4.2500000000000115 V5.450000000000012 Q6.3500000000000005 6.550000000000011 4.95 6.550000000000011 Q6.3500000000000005 6.550000000000011 6.3500000000000005 7.650000000000011 V8.850000000000012 Q6.3500000000000005 10.850000000000012 8.450000000000001 10.850000000000012" fill="none" stroke="#fffbe8" stroke-width="1.15"/></svg>
<div style="position:absolute;left:329.5px;top:260.1px;height:6.3px;line-height:6.3px;font-size:5.25px;color:#333;white-space:nowrap;">Wert</div>
<svg style="position:absolute;left:309.8px;top:259.45px" width="7.0" height="7.0"><circle cx="3.5" cy="3.5" r="2.2" fill="#e2e2e2" stroke="#9a9a9a" stroke-width="0.6"/></svg>
<svg style="position:absolute;left:353.8px;top:259.45px" width="7.0" height="7.0"><circle cx="3.5" cy="3.5" r="2.2" fill="#e2e2e2" stroke="#9a9a9a" stroke-width="0.6"/></svg>
<div style="position:absolute;left:135px;top:273.0px;height:5.3999999999999995px;line-height:5.3999999999999995px;font-size:4.5px;color:#707070;white-space:nowrap;">0: false</div>
<div style="position:absolute;left:120px;top:280.1px;height:5.3999999999999995px;line-height:5.3999999999999995px;font-size:4.5px;color:#808080;white-space:nowrap;">TRG</div>
<div style="position:absolute;left:131.7px;top:278.5px;width:89.20000000000002px;height:13.100000000000023px;background:#a6bbcf;border:0.6px solid rgba(0,0,0,0.14);border-radius:1.8px;overflow:hidden">
<div style="position:absolute;left:0;top:0;width:13.3px;height:100%;background:rgba(0,0,0,0.05);"></div>
</div>
<svg style="position:absolute;left:131.7px;top:278.5px;" width="13.3" height="13.100000000000023" viewBox="0 0 13.3 13.100000000000023"><path d="M3.8500000000000005 5.050000000000011 H6.45 V2.7500000000000115 L9.65 6.550000000000011 L6.45 10.350000000000012 V8.050000000000011 H3.8500000000000005 Z" fill="#fff"/></svg>
<div style="position:absolute;left:147.89999999999998px;top:282.20000000000005px;height:6.3px;line-height:6.3px;font-size:5.25px;color:#333;white-space:nowrap;">Pumpe 1 | 167, 2, STATE</div>
<svg style="position:absolute;left:128.7px;top:282.05px;" width="6" height="6" viewBox="0 0 6 6"><rect x="1.1" y="1.1" width="3.8" height="3.8" rx="0.6" fill="#dedede" stroke="#999" stroke-width="0.6"/></svg>
<svg style="position:absolute;left:217.4px;top:281.55px" width="7.0" height="7.0"><circle cx="3.5" cy="3.5" r="2.2" fill="#e2e2e2" stroke="#9a9a9a" stroke-width="0.6"/></svg>
<div style="position:absolute;left:313.3px;top:278.5px;width:44.0px;height:13.100000000000023px;background:#f3b567;border:0.6px solid rgba(0,0,0,0.14);border-radius:1.8px;overflow:hidden">
<div style="position:absolute;left:0;top:0;width:13.3px;height:100%;background:rgba(0,0,0,0.05);"></div>
</div>
<svg style="position:absolute;left:313.3px;top:278.5px;" width="13.3" height="13.100000000000023" viewBox="0 0 13.3 13.100000000000023"><path d="M8.450000000000001 2.2500000000000115 Q6.3500000000000005 2.2500000000000115 6.3500000000000005 4.2500000000000115 V5.450000000000012 Q6.3500000000000005 6.550000000000011 4.95 6.550000000000011 Q6.3500000000000005 6.550000000000011 6.3500000000000005 7.650000000000011 V8.850000000000012 Q6.3500000000000005 10.850000000000012 8.450000000000001 10.850000000000012" fill="none" stroke="#fffbe8" stroke-width="1.15"/></svg>
<div style="position:absolute;left:329.5px;top:282.20000000000005px;height:6.3px;line-height:6.3px;font-size:5.25px;color:#333;white-space:nowrap;">Wert</div>
<svg style="position:absolute;left:309.8px;top:281.55px" width="7.0" height="7.0"><circle cx="3.5" cy="3.5" r="2.2" fill="#e2e2e2" stroke="#9a9a9a" stroke-width="0.6"/></svg>
<svg style="position:absolute;left:353.8px;top:281.55px" width="7.0" height="7.0"><circle cx="3.5" cy="3.5" r="2.2" fill="#e2e2e2" stroke="#9a9a9a" stroke-width="0.6"/></svg>
<div style="position:absolute;left:135px;top:295.1px;height:5.3999999999999995px;line-height:5.3999999999999995px;font-size:4.5px;color:#707070;white-space:nowrap;">0: false</div>
<div style="position:absolute;left:120px;top:302.20000000000005px;height:5.3999999999999995px;line-height:5.3999999999999995px;font-size:4.5px;color:#808080;white-space:nowrap;">TRG</div>
<div style="position:absolute;left:131.7px;top:300.6px;width:89.20000000000002px;height:13.100000000000023px;background:#a6bbcf;border:0.6px solid rgba(0,0,0,0.14);border-radius:1.8px;overflow:hidden">
<div style="position:absolute;left:0;top:0;width:13.3px;height:100%;background:rgba(0,0,0,0.05);"></div>
</div>
<svg style="position:absolute;left:131.7px;top:300.6px;" width="13.3" height="13.100000000000023" viewBox="0 0 13.3 13.100000000000023"><path d="M3.8500000000000005 5.050000000000011 H6.45 V2.7500000000000115 L9.65 6.550000000000011 L6.45 10.350000000000012 V8.050000000000011 H3.8500000000000005 Z" fill="#fff"/></svg>
<div style="position:absolute;left:147.89999999999998px;top:304.30000000000007px;height:6.3px;line-height:6.3px;font-size:5.25px;color:#333;white-space:nowrap;">Pumpe 2 | 167, 3, STATE</div>
<svg style="position:absolute;left:128.7px;top:304.15000000000003px;" width="6" height="6" viewBox="0 0 6 6"><rect x="1.1" y="1.1" width="3.8" height="3.8" rx="0.6" fill="#dedede" stroke="#999" stroke-width="0.6"/></svg>
<svg style="position:absolute;left:217.4px;top:303.65000000000003px" width="7.0" height="7.0"><circle cx="3.5" cy="3.5" r="2.2" fill="#e2e2e2" stroke="#9a9a9a" stroke-width="0.6"/></svg>
<div style="position:absolute;left:313.3px;top:300.6px;width:44.0px;height:13.100000000000023px;background:#f3b567;border:0.6px solid rgba(0,0,0,0.14);border-radius:1.8px;overflow:hidden">
<div style="position:absolute;left:0;top:0;width:13.3px;height:100%;background:rgba(0,0,0,0.05);"></div>
</div>
<svg style="position:absolute;left:313.3px;top:300.6px;" width="13.3" height="13.100000000000023" viewBox="0 0 13.3 13.100000000000023"><path d="M8.450000000000001 2.2500000000000115 Q6.3500000000000005 2.2500000000000115 6.3500000000000005 4.2500000000000115 V5.450000000000012 Q6.3500000000000005 6.550000000000011 4.95 6.550000000000011 Q6.3500000000000005 6.550000000000011 6.3500000000000005 7.650000000000011 V8.850000000000012 Q6.3500000000000005 10.850000000000012 8.450000000000001 10.850000000000012" fill="none" stroke="#fffbe8" stroke-width="1.15"/></svg>
<div style="position:absolute;left:329.5px;top:304.30000000000007px;height:6.3px;line-height:6.3px;font-size:5.25px;color:#333;white-space:nowrap;">Wert</div>
<svg style="position:absolute;left:309.8px;top:303.65000000000003px" width="7.0" height="7.0"><circle cx="3.5" cy="3.5" r="2.2" fill="#e2e2e2" stroke="#9a9a9a" stroke-width="0.6"/></svg>
<svg style="position:absolute;left:353.8px;top:303.65000000000003px" width="7.0" height="7.0"><circle cx="3.5" cy="3.5" r="2.2" fill="#e2e2e2" stroke="#9a9a9a" stroke-width="0.6"/></svg>
<div style="position:absolute;left:436.2px;top:256.3px;width:44.69999999999999px;height:13.0px;background:#dcc4df;border:0.6px solid rgba(0,0,0,0.14);border-radius:1.8px;overflow:hidden">
<div style="position:absolute;right:0;top:0;width:14px;height:100%;background:rgba(0,0,0,0.05);"></div>
</div>
<svg style="position:absolute;left:466.9px;top:256.3px;" width="14" height="13.0" viewBox="0 0 14 13.0"><path d="M6.0 3.0 A4 4 0 0 1 6.0 10.0 M4.5 4.5 A2.5 2.5 0 0 1 4.5 8.5 M8.0 2.0 A5.5 5.5 0 0 1 8.0 11.0" fill="none" stroke="#fff" stroke-width="0.6" opacity="0.9"/></svg>
<div style="position:absolute;right:225.40000000000003px;top:259.95000000000005px;height:6.3px;line-height:6.3px;font-size:5.25px;color:#333;white-space:nowrap;font-style:italic;font-weight:bold">test</div>
<svg style="position:absolute;left:432.7px;top:259.3px" width="7.0" height="7.0"><circle cx="3.5" cy="3.5" r="2.2" fill="#e2e2e2" stroke="#9a9a9a" stroke-width="0.6"/></svg>
<div style="position:absolute;left:439.5px;top:270.6px;width:5px;height:5px;background:#3e9b7c;border:0.5px solid #2f7a60;border-radius:1px"></div>
<div style="position:absolute;left:447px;top:269.98px;height:6.24px;line-height:6.24px;font-size:5.2px;color:#7a7a7a;white-space:nowrap;">connected</div>
<div style="position:absolute;left:541px;top:64.8px;width:7px;height:359.4px;background:#f3f3f3;border-left:0.5px solid #e5e5e5"></div>
<div style="position:absolute;left:541.2px;top:71.7px;width:6.6px;height:56.1px;background:#bdbdbd"></div>
<svg style="position:absolute;left:541.5px;top:66.5px;" width="6" height="4" viewBox="0 0 6 4"><path d="M0.8 3.2 L3 1 L5.2 3.2 Z" fill="#666"/></svg>
<svg style="position:absolute;left:541.5px;top:418px;" width="6" height="4" viewBox="0 0 6 4"><path d="M0.8 0.8 L3 3 L5.2 0.8 Z" fill="#333"/></svg>
<div style="position:absolute;left:79.5px;top:424.2px;width:461.5px;height:6.8px;background:#f3f3f3;border-top:0.5px solid #e5e5e5"></div>
<div style="position:absolute;left:86.4px;top:424.3px;width:93.3px;height:6.5px;background:#bdbdbd"></div>
<svg style="position:absolute;left:81px;top:425px;" width="4" height="6" viewBox="0 0 4 6"><path d="M3.2 0.8 L1 3 L3.2 5.2 Z" fill="#666"/></svg>
<svg style="position:absolute;left:535px;top:425px;" width="4" height="6" viewBox="0 0 4 6"><path d="M0.8 0.8 L3 3 L0.8 5.2 Z" fill="#333"/></svg>
<div style="position:absolute;left:541px;top:424.2px;width:7px;height:6.8px;background:#dcdcdc"></div>
<div style="position:absolute;left:548px;top:64.8px;width:3.2px;height:376.5px;background:#f3f3f3;border-right:0.6px solid #d8d8d8"></div>
<div style="position:absolute;left:549.2px;top:233px;width:0.8px;height:23px;background:#cfcfcf"></div>
<div style="position:absolute;left:551.2px;top:48.7px;width:138.8px;height:392.6px;background:#fff"></div>
<div style="position:absolute;left:551.2px;top:48.7px;width:138.8px;height:16.1px;background:#f7f7f7;border-bottom:0.6px solid #dedede"></div>
<div style="position:absolute;left:553px;top:50.2px;width:43.2px;height:14.7px;background:#fff;border:0.6px solid #e0e0e0;border-bottom:none"></div>
<svg style="position:absolute;left:557.8px;top:53.3px;" width="6" height="7" viewBox="0 0 6 7"><ellipse cx="3" cy="4.3" rx="1.7" ry="2.2" fill="#555"/><circle cx="3" cy="1.6" r="1" fill="#555"/><path d="M0.4 2.8 L1.6 3.4 M5.6 2.8 L4.4 3.4 M0.3 4.6 H1.4 M5.7 4.6 H4.6 M0.5 6.3 L1.6 5.6 M5.5 6.3 L4.4 5.6" stroke="#555" stroke-width="0.5"/><path d="M3 2.6 V6.2" stroke="#fff" stroke-width="0.35"/></svg>
<div style="position:absolute;left:566.5px;top:53.53px;height:7.14px;line-height:7.14px;font-size:5.95px;color:#1a1a1a;white-space:nowrap;font-weight:bold">Debug</div>
<div style="position:absolute;left:601.4px;top:51.3px;width:11.6px;height:12.7px;background:#fff;border:0.5px solid #e4e4e4;"></div>
<div style="position:absolute;left:407.19999999999993px;width:400px;text-align:center;top:53.4px;height:8.4px;line-height:8.4px;font-size:7px;color:#333;white-space:nowrap;font-weight:bold">i</div>
<div style="position:absolute;left:616.5px;top:51.3px;width:11.6px;height:12.7px;background:#fff;border:0.5px solid #e4e4e4;"></div>
<svg style="position:absolute;left:618.8px;top:54.6px;" width="7" height="6" viewBox="0 0 7 6"><path d="M1.7 0.7 H6.3 L5.3 4.6 H0.7 Z" fill="none" stroke="#777" stroke-width="0.7"/><path d="M0.7 4.6 L0.5 5.4 H5 L5.3 4.6" fill="none" stroke="#999" stroke-width="0.5"/></svg>
<div style="position:absolute;left:631.6px;top:51.3px;width:11.6px;height:12.7px;background:#ececec;border:0.5px solid #e4e4e4;border-bottom:1px solid #9a9a9a;"></div>
<svg style="position:absolute;left:634.4px;top:54.1px;" width="6" height="7" viewBox="0 0 6 7"><ellipse cx="3" cy="4.3" rx="1.7" ry="2.2" fill="#444"/><circle cx="3" cy="1.6" r="1" fill="#444"/><path d="M0.4 2.8 L1.6 3.4 M5.6 2.8 L4.4 3.4 M0.3 4.6 H1.4 M5.7 4.6 H4.6 M0.5 6.3 L1.6 5.6 M5.5 6.3 L4.4 5.6" stroke="#444" stroke-width="0.5"/><path d="M3 2.6 V6.2" stroke="#eee" stroke-width="0.35"/></svg>
<div style="position:absolute;left:646.7px;top:51.3px;width:11.6px;height:12.7px;background:#fff;border:0.5px solid #e4e4e4;"></div>
<svg style="position:absolute;left:649.5px;top:54.6px;" width="6" height="6" viewBox="0 0 6 6"><circle cx="3" cy="3" r="1.9" fill="none" stroke="#444" stroke-width="1"/><path d="M3 0.3 V1.2 M3 4.8 V5.7 M0.3 3 H1.2 M4.8 3 H5.7" stroke="#444" stroke-width="0.8"/></svg>
<div style="position:absolute;left:661.8px;top:51.3px;width:11.6px;height:12.7px;background:#fff;border:0.5px solid #e4e4e4;"></div>
<svg style="position:absolute;left:665.0999999999999px;top:54.300000000000004px;" width="5" height="7" viewBox="0 0 5 7"><rect x="0.5" y="1.3" width="4" height="5.2" fill="#888"/><rect x="0.2" y="0.4" width="4.6" height="0.8" fill="#888"/></svg>
<svg style="position:absolute;left:680px;top:56px;" width="5" height="3" viewBox="0 0 5 3"><path d="M0.5 0.5 L2.5 2.5 L4.5 0.5 Z" fill="#444"/></svg>
<div style="position:absolute;left:551.2px;top:64.8px;width:138.8px;height:17.8px;background:#f3f3f3;border-bottom:0.5px solid #e3e3e3"></div>
<div style="position:absolute;left:657px;top:68.5px;width:12px;height:10px;background:#fff;border:0.5px solid #e6e6e6;border-radius:1px"></div>
<svg style="position:absolute;left:660px;top:70.5px;" width="6" height="6" viewBox="0 0 6 6"><path d="M0.4 0.6 H5.6 L3.6 2.9 V5.5 L2.4 4.9 V2.9 Z" fill="#444"/></svg>
<div style="position:absolute;left:673.8px;top:68.5px;width:11px;height:10px;background:#fff;border:0.5px solid #e6e6e6;border-radius:1px"></div>
<svg style="position:absolute;left:676.8px;top:70.5px;" width="5" height="6" viewBox="0 0 5 6"><rect x="0.7" y="1.2" width="3.6" height="4.3" fill="none" stroke="#555" stroke-width="0.9"/><rect x="0.3" y="0.2" width="4.4" height="0.8" fill="#555"/></svg>
<div style="position:absolute;left:0px;top:431px;width:690px;height:10.8px;background:#f3f3f3;border-top:0.6px solid #e0e0e0"></div>
<div style="position:absolute;left:78.8px;top:431px;width:0.7px;height:10.8px;background:#dedede"></div>
<div style="position:absolute;left:551px;top:431px;width:0.7px;height:10.8px;background:#dedede"></div>
<div style="position:absolute;left:59.7px;top:432px;width:6px;height:8.5px;background:#fff"></div>
<div style="position:absolute;left:68.8px;top:432px;width:6px;height:8.5px;background:#fff"></div>
<svg style="position:absolute;left:60.2px;top:434px;" width="5" height="4" viewBox="0 0 5 4"><path d="M0.8 3.2 L2.5 1 L4.2 3.2" fill="none" stroke="#aaa" stroke-width="0.7"/></svg>
<svg style="position:absolute;left:69.3px;top:434px;" width="5" height="4" viewBox="0 0 5 4"><path d="M0.8 0.8 L2.5 3 L4.2 0.8" fill="none" stroke="#aaa" stroke-width="0.7"/></svg>
<svg style="position:absolute;left:508.5px;top:433px;" width="8" height="7" viewBox="0 0 8 7"><path d="M0.8 1 H3.7 V6 H0.8 Z M4.3 1 H7.2 V6 H4.3 Z" fill="none" stroke="#999" stroke-width="0.6"/></svg>
<div style="position:absolute;left:518.5px;top:432px;width:23px;height:8.5px;background:#fff"></div>
<svg style="position:absolute;left:519.5px;top:433px;" width="23" height="7" viewBox="0 0 23 7"><path d="M1.6 3.5 H5.6" stroke="#555" stroke-width="1"/><circle cx="11" cy="3.5" r="2.1" fill="none" stroke="#555" stroke-width="0.8"/><path d="M20 1.5 V5.5 M18 3.5 H22" stroke="#555" stroke-width="1"/></svg>
<svg style="position:absolute;left:679px;top:432.5px;" width="8" height="7" viewBox="0 0 8 7"><rect x="0.8" y="0.8" width="6.4" height="4.3" fill="none" stroke="#888" stroke-width="0.7"/><path d="M2.5 6.3 H5.5" stroke="#888" stroke-width="0.7"/></svg>
<div style="position:absolute;left:0px;top:441.6px;width:690px;height:18.4px;background:#2d2d2d"></div>
<div style="position:absolute;left:0px;top:441.6px;width:21px;height:18.4px;background:#262626"></div>
<svg style="position:absolute;left:6.8px;top:446.6px;" width="8" height="8" viewBox="0 0 8 8"><path d="M0.3 1.2 L3.4 0.8 V3.7 H0.3 Z M3.9 0.7 L7.6 0.2 V3.7 H3.9 Z M0.3 4.2 H3.4 V7.1 L0.3 6.7 Z M3.9 4.2 H7.6 V7.7 L3.9 7.2 Z" fill="#fff"/></svg>
<div style="position:absolute;left:21px;top:441.6px;width:152px;height:18.4px;background:#f4f4f4;border-top:0.6px solid #d0d0d0"></div>
<svg style="position:absolute;left:26.5px;top:445.5px;" width="10" height="11" viewBox="0 0 10 11"><circle cx="5.8" cy="4.2" r="3" fill="none" stroke="#222" stroke-width="0.9"/><path d="M3.6 6.4 L0.8 9.6" stroke="#222" stroke-width="1"/></svg>
<div style="position:absolute;left:40.7px;top:447.124px;height:7.752px;line-height:7.752px;font-size:6.46px;color:#222;white-space:nowrap;">Zur Suche Text hier eingeben</div>
<svg style="position:absolute;left:137px;top:443px;" width="36" height="17" viewBox="0 0 36 17">
<defs><linearGradient id="mg" x1="0" y1="0" x2="0" y2="1"><stop offset="0" stop-color="#7a86c8"/><stop offset="1" stop-color="#3660b5"/></linearGradient></defs>
<path d="M1 17 Q6 11 10 9.5 Q15 4 20 4.5 Q28 4.5 36 8.5 V17 Z" fill="url(#mg)"/>
<path d="M10 9.5 Q15 4 20 4.5 Q28 4.5 36 8.5" fill="none" stroke="#1b2035" stroke-width="0.9"/>
<ellipse cx="13" cy="14.5" rx="2.2" ry="1.6" fill="#c4d7f7"/><ellipse cx="21" cy="13.8" rx="2.2" ry="1.6" fill="#c4d7f7"/><ellipse cx="29" cy="14.5" rx="2.2" ry="1.6" fill="#c4d7f7"/>
<path d="M3 6.5 Q7 4.5 11 5.5" stroke="#e8b3c4" stroke-width="1.1" fill="none"/>
<path d="M6.5 3.8 Q9 2.2 12.5 3" stroke="#ecc3cf" stroke-width="0.8" fill="none"/>
</svg>
<svg style="position:absolute;left:178.5px;top:446.5px;" width="9" height="9" viewBox="0 0 9 9"><rect x="1.5" y="1.5" width="6" height="6" fill="none" stroke="#aaa" stroke-width="0.7"/><path d="M0.3 1 V8 M8.7 1 V8" stroke="#aaa" stroke-width="0.6"/></svg>
<svg style="position:absolute;left:199px;top:446px;" width="13" height="10" viewBox="0 0 13 10"><path d="M0.8 1 H5 L6 2.2 H12 V9.2 H0.8 Z" fill="#e8b53a"/><rect x="0.8" y="3.3" width="11.2" height="5.9" fill="#f7cf5a"/><rect x="3.6" y="5.8" width="5.6" height="2.2" fill="#3a8fd6"/></svg>
<div style="position:absolute;left:216.8px;top:441.6px;width:21.4px;height:18.4px;background:#494949"></div>
<svg style="position:absolute;left:221.5px;top:445.5px;" width="11" height="11" viewBox="0 0 11 11"><circle cx="5.5" cy="5.5" r="5" fill="#1b84d4"/><path d="M1.2 6.5 C1.5 2.5 8 1.5 9.6 4.6 C8 3.2 4.6 4 4.6 6.8 C4.6 9 7 10 9.5 9" fill="#49c46a" opacity="0.9"/><circle cx="6.6" cy="6.2" r="1.9" fill="#2d2d2d" opacity="0.55"/></svg>
<div style="position:absolute;left:219px;top:458.8px;width:17px;height:1.2px;background:#9fb7d8"></div>
<svg style="position:absolute;left:243.5px;top:445.8px;" width="12" height="11" viewBox="0 0 12 11"><rect x="4" y="1" width="7.5" height="9" fill="#47a7f0"/><rect x="0.5" y="2.6" width="6" height="6" fill="#0f64c8"/><ellipse cx="3.5" cy="5.6" rx="1.5" ry="1.8" fill="none" stroke="#fff" stroke-width="0.8"/></svg>
<svg style="position:absolute;left:266px;top:445.5px;" width="11" height="11" viewBox="0 0 11 11"><circle cx="5.5" cy="5.5" r="5" fill="#1ed760"/><path d="M2.6 4.2 Q5.5 3 8.5 4.5 M3 6 Q5.5 5 8 6.2 M3.4 7.6 Q5.5 6.8 7.6 7.8" fill="none" stroke="#1a1a1a" stroke-width="0.7"/></svg>
<div style="position:absolute;left:263px;top:458.8px;width:17px;height:1.2px;background:#9fb7d8"></div>
<svg style="position:absolute;left:475px;top:445.5px;" width="14" height="10" viewBox="0 0 14 10"><ellipse cx="7" cy="6.3" rx="6" ry="3.4" fill="#b7d0ee"/><circle cx="6" cy="4.6" r="3.2" fill="#c9dcf3"/><circle cx="11.6" cy="1.6" r="1.2" fill="#e2403b"/></svg>
<div style="position:absolute;left:490px;top:447.64px;height:7.319999999999999px;line-height:7.319999999999999px;font-size:6.1px;color:#f0f0f0;white-space:nowrap;">4°C&nbsp; Bewölkt</div>
<svg style="position:absolute;left:534px;top:448px;" width="7" height="5" viewBox="0 0 7 5"><path d="M0.8 3.8 L3.5 1 L6.2 3.8" fill="none" stroke="#ddd" stroke-width="0.8"/></svg>
<svg style="position:absolute;left:546.5px;top:445.5px;" width="8" height="10" viewBox="0 0 8 10"><rect x="1.5" y="0.8" width="5" height="8" rx="2.5" fill="none" stroke="#ddd" stroke-width="0.8"/><circle cx="4" cy="5" r="1.3" fill="#ddd"/></svg>
<svg style="position:absolute;left:559.5px;top:447px;" width="12" height="7" viewBox="0 0 12 7"><path d="M2 6.5 H10 A2.3 2.3 0 0 0 9.5 2.3 A3.3 3.3 0 0 0 3.5 2.8 A2 2 0 0 0 2 6.5 Z" fill="#eee"/></svg>
<svg style="position:absolute;left:575px;top:447px;" width="11" height="7" viewBox="0 0 11 7"><rect x="0.5" y="1" width="9" height="5" fill="none" stroke="#ddd" stroke-width="0.8"/><rect x="1.3" y="1.8" width="5.5" height="3.4" fill="#ddd"/><rect x="9.5" y="2.5" width="1" height="2" fill="#ddd"/></svg>
<svg style="position:absolute;left:590px;top:446.5px;" width="9" height="8" viewBox="0 0 9 8"><path d="M1 7.5 A6.5 6.5 0 0 1 7.5 1 M2.8 7.5 A4.7 4.7 0 0 1 7.5 2.8 M4.6 7.5 A2.9 2.9 0 0 1 7.5 4.6" fill="none" stroke="#777" stroke-width="0.7"/></svg>
<svg style="position:absolute;left:604px;top:445.5px;" width="11" height="10" viewBox="0 0 11 10"><path d="M1.5 8.5 L4 6 M6 4 L8.5 1.5" stroke="#eee" stroke-width="1.1"/><circle cx="3" cy="7" r="1.6" fill="none" stroke="#eee" stroke-width="0.8"/><circle cx="7" cy="3" r="1.6" fill="none" stroke="#eee" stroke-width="0.8"/><path d="M3.5 3.5 L6.5 6.5" stroke="#eee" stroke-width="0.9"/></svg>
<svg style="position:absolute;left:620px;top:446px;" width="11" height="9" viewBox="0 0 11 9"><rect x="0.8" y="0.8" width="9.4" height="7.4" fill="none" stroke="#ddd" stroke-width="0.8"/><rect x="2.2" y="4.3" width="6.6" height="2.4" fill="#ddd"/></svg>
<div style="position:absolute;left:451.5px;width:400px;text-align:center;top:443.68px;height:6.24px;line-height:6.24px;font-size:5.2px;color:#f0f0f0;white-space:nowrap;">16:39</div>
<div style="position:absolute;left:451.5px;width:400px;text-align:center;top:451.8px;height:6.0px;line-height:6.0px;font-size:5.0px;color:#f0f0f0;white-space:nowrap;">16.01.2023</div>
<svg style="position:absolute;left:667.5px;top:445.5px;" width="12" height="12" viewBox="0 0 12 12"><path d="M1 1.2 H10 V7.2 H5 L3 9 V7.2 H1 Z" fill="#eee"/><circle cx="8.8" cy="8.6" r="2.6" fill="#2d2d2d" stroke="#eee" stroke-width="0.6"/><text x="8.8" y="10.2" font-size="4.2" text-anchor="middle" fill="#eee" font-family="Liberation Sans">9</text></svg>
<div style="position:absolute;left:688.3px;top:441.6px;width:0.6px;height:18.4px;background:#777"></div>
</body></html>
